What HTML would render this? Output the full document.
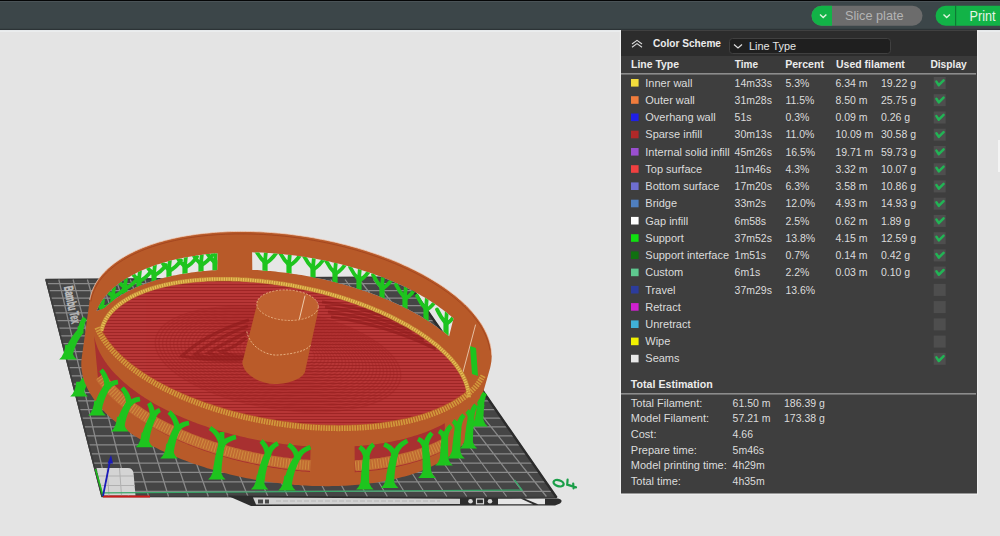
<!DOCTYPE html>
<html><head><meta charset="utf-8"><style>
html,body{margin:0;padding:0;width:1000px;height:536px;overflow:hidden;background:#e4e4e4}
svg{display:block}
.r{font-family:"Liberation Sans",sans-serif;fill:#dcdcdc}
.b{font-family:"Liberation Sans",sans-serif;font-weight:bold;fill:#ececec}
.n{font-family:"Liberation Sans",sans-serif;fill:#dcdcdc;font-size:10.5px}
</style></head><body>
<svg width="1000" height="536" viewBox="0 0 1000 536">
<rect x="0" y="31" width="1000" height="505" fill="#e4e4e4"/>
<path d="M46.0,279.5 L404.0,277.0 L556.5,497.5 L102.0,496.5 Z" fill="#454545" stroke="#3a3a3a" stroke-width="1.5" stroke-linejoin="round"/>
<path d="M58.8,279.5 L108.8,496.5 M73.1,279.5 L128.7,496.5 M87.4,279.5 L148.6,496.5 M101.7,279.5 L168.5,496.5 M116.0,279.5 L188.4,496.5 M130.3,279.5 L208.3,496.5 M144.7,279.5 L228.1,496.5 M159.0,279.5 L248.0,496.5 M173.3,279.5 L267.9,496.5 M187.6,279.5 L287.8,496.5 M201.9,279.5 L307.7,496.5 M216.2,279.5 L327.6,496.5 M230.5,279.5 L347.5,496.5 M244.8,279.5 L367.4,496.5 M259.1,279.5 L387.3,496.5 M273.4,279.5 L407.2,496.5 M287.8,279.5 L427.1,496.5 M302.1,279.5 L446.9,496.5 M316.4,279.5 L466.8,496.5 M330.7,279.5 L486.7,496.5 M345.0,279.5 L506.6,496.5 M359.3,279.5 L526.5,496.5 M373.6,279.5 L546.4,496.5 M47.5,283.5 L408.0,283.5 M49.4,290.7 L413.0,290.7 M51.3,298.1 L418.1,298.1 M53.2,305.5 L423.2,305.5 M55.1,312.9 L428.3,312.9 M57.1,320.5 L433.6,320.5 M59.1,328.1 L438.9,328.1 M61.0,335.9 L444.2,335.9 M63.1,343.7 L449.6,343.7 M65.1,351.6 L455.1,351.6 M67.2,359.6 L460.6,359.6 M69.3,367.7 L466.2,367.7 M71.4,375.8 L471.9,375.8 M73.5,384.1 L477.6,384.1 M75.7,392.5 L483.4,392.5 M77.8,400.9 L489.2,400.9 M80.0,409.5 L495.1,409.5 M82.3,418.2 L501.1,418.2 M84.5,426.9 L507.2,426.9 M86.8,435.8 L513.3,435.8 M89.2,444.8 L519.5,444.8 M91.5,453.9 L525.8,453.9 M93.9,463.1 L532.2,463.1 M96.3,472.4 L538.6,472.4 M98.7,481.8 L545.1,481.8 M101.2,491.3 L551.7,491.3" stroke="#8a8a8a" stroke-width="1.25" fill="none"/>
<path d="M404,277 L556.5,497.5" stroke="#2c2c2c" stroke-width="2.4" fill="none"/>
<path d="M46,279.5 L102,496.5" stroke="#3c3c3c" stroke-width="1.5" fill="none"/>
<path d="M96.5,468 L128,468 Q132.5,468 133.5,473 L135.5,495.5 L103,495.5 Z" fill="#d4d4d4"/>
<path d="M99,476 H134 M101.5,485.5 H135 M107,468 L109,495.5 M119.5,468 L121.5,495.5" stroke="#b0b0b0" stroke-width="1" fill="none"/>
<path d="M104,492.8 L522,490 L514.5,480" stroke="#3aa86a" stroke-width="1.3" fill="none"/>
<text x="0" y="0" transform="translate(64,287) rotate(79) scale(0.56,1)" class="b" font-size="13" style="fill:#bdbdbd;stroke:#bdbdbd;stroke-width:0.6">Bambu</text>
<text x="0" y="0" transform="translate(69.5,312.5) rotate(79) scale(0.56,1)" class="b" font-size="13" style="fill:#b5b5b5;stroke:#b5b5b5;stroke-width:0.6">Tex</text>
<path d="M227,495.5 L558,498.5 Q564,500 560,503.5 L555,505.5 L251,506 Z" fill="#2d2d2d"/>
<path d="M253,497.5 L460,498.8 L460,504 L256,504.5 Z" fill="#d2d2d2"/>
<path d="M498,498.8 L521,498.8 L533,504.2 L498,504.2 Z M525,498.8 L545,498.8 L545,504.2 L538,504.2 Z" fill="#e6e6e6"/>
<rect x="476.5" y="499" width="7" height="4.8" fill="none" stroke="#d8d8d8" stroke-width="1.2"/>
<ellipse cx="470.5" cy="501.3" rx="2.3" ry="2.3" fill="#d8d8d8"/><ellipse cx="490" cy="501.3" rx="2.3" ry="2.3" fill="#d8d8d8"/>
<path d="M258,499.5 h5 v4 h-5z M265,499.5 h4 v4 h-4z" fill="#4a4a4a"/>
<path d="M276,501 H440" stroke="#c4c4c4" stroke-width="2" stroke-dasharray="5,2"/>
<path d="M103,496.5 L150,496.5" stroke="#cc1a1a" stroke-width="2.2"/>
<path d="M103,496 L95.5,469" stroke="#1cc01c" stroke-width="1.5"/>
<path d="M103,496 L110,461" stroke="#1a1ab8" stroke-width="1.8"/>
<path d="M111,455 L107.5,463.5 L113,463.5 Z" fill="#1a1ab8"/>
<ellipse cx="558.6" cy="483.2" rx="5.2" ry="3.0" transform="rotate(16 558.6 483.2)" fill="none" stroke="#1a9e48" stroke-width="2.3"/>
<path d="M567.6,479.6 L567.2,484.6 L576,487.4 M573.2,483.6 L573.6,488.4" fill="none" stroke="#1a9e48" stroke-width="2.2" stroke-linecap="round"/>
<path d="M72.3,357.8 L72.7,355.3 L73.3,352.8 L74.0,350.3 L74.8,347.9 L75.8,345.4 L76.9,343.0 L78.2,340.6 L79.6,338.2 L81.2,335.8 L82.9,333.5 L77.8,329.2 L75.7,331.7 L73.8,334.2 L72.0,336.8 L70.3,339.4 L68.8,342.1 L67.5,344.8 L66.3,347.6 L65.3,350.4 L64.4,353.3 L63.7,356.2 Z" fill="#1ec41e"/>
<path d="M83.3,333.3 L83.2,332.1 L83.1,330.9 L83.0,329.8 L82.8,328.8 L82.7,327.9 L82.6,327.1 L82.4,326.4 L82.3,325.7 L77.7,326.3 L77.7,326.8 L77.7,327.4 L77.6,328.2 L77.6,329.0 L77.5,330.0 L77.5,331.0 L77.4,332.2 L77.4,333.4 Z" fill="#1ec41e"/>
<path d="M83.3,333.6 L83.4,331.3 L83.6,329.1 L84.0,327.1 L84.4,325.3 L84.8,323.6 L85.4,322.0 L86.1,320.6 L86.8,319.4 L83.2,316.6 L82.0,318.2 L81.0,319.9 L80.1,321.7 L79.3,323.7 L78.7,325.9 L78.1,328.2 L77.7,330.6 L77.4,333.2 Z" fill="#1ec41e"/>
<path d="M59.2,359.5 Q64.8,354.5 65.2,344.7 L70.8,344.7 Q71.2,354.5 76.8,359.5 Z" fill="#1ec41e"/>
<path d="M83.2,395.0 L83.8,392.8 L84.5,390.5 L85.4,388.2 L86.5,385.9 L87.7,383.6 L89.2,381.4 L90.8,379.1 L92.7,376.8 L94.7,374.6 L96.9,372.3 L92.5,367.4 L89.9,369.7 L87.5,372.0 L85.2,374.4 L83.2,376.9 L81.3,379.4 L79.6,382.0 L78.1,384.7 L76.8,387.4 L75.7,390.1 L74.8,393.0 Z" fill="#1ec41e"/>
<path d="M97.7,371.7 L97.4,368.8 L97.1,366.1 L96.6,363.5 L96.1,361.1 L95.5,358.8 L94.7,356.7 L93.9,354.8 L93.0,353.0 L89.0,355.0 L89.6,356.6 L90.1,358.3 L90.6,360.1 L90.9,362.2 L91.3,364.4 L91.5,366.7 L91.7,369.3 L91.8,372.0 Z" fill="#1ec41e"/>
<path d="M97.4,373.1 L97.4,372.9 L97.6,372.6 L98.0,372.2 L98.7,371.8 L99.7,371.3 L101.0,370.9 L102.5,370.6 L104.2,370.3 L103.8,365.7 L101.8,365.9 L100.0,366.1 L98.3,366.5 L96.7,366.9 L95.3,367.5 L94.0,368.3 L92.9,369.3 L92.0,370.6 Z" fill="#1ec41e"/>
<path d="M70.2,396.5 Q75.8,391.5 76.2,381.7 L81.8,381.7 Q82.2,391.5 87.8,396.5 Z" fill="#1ec41e"/>

<path d="M81.3,363.8 L81.3,362.1 L81.4,360.5 L81.6,358.8 L81.8,357.2 L89.7,300.2 L90.0,298.6 L90.3,296.9 L90.7,295.3 L91.2,293.7 L91.7,292.1 L92.3,290.5 L93.0,288.9 L93.7,287.3 L94.5,285.7 L95.3,284.2 L96.2,282.7 L97.1,281.1 L98.2,279.6 L99.2,278.1 L100.4,276.7 L101.5,275.2 L102.8,273.8 L104.1,272.4 L105.4,271.0 L106.9,269.6 L108.3,268.2 L109.9,266.9 L111.4,265.5 L113.1,264.2 L114.8,263.0 L116.5,261.7 L118.3,260.5 L120.1,259.2 L122.0,258.0 L124.0,256.9 L126.0,255.7 L128.1,254.6 L130.2,253.5 L132.3,252.4 L134.5,251.3 L136.7,250.3 L139.0,249.3 L141.4,248.3 L143.8,247.3 L146.2,246.4 L148.7,245.5 L151.2,244.6 L153.7,243.8 L156.3,242.9 L159.0,242.1 L161.7,241.4 L164.4,240.6 L167.1,239.9 L169.9,239.2 L172.8,238.5 L175.6,237.9 L178.5,237.3 L181.5,236.7 L184.4,236.2 L187.5,235.7 L190.5,235.2 L193.5,234.7 L196.6,234.3 L199.8,233.9 L202.9,233.5 L206.1,233.2 L209.3,232.9 L212.5,232.6 L215.8,232.3 L219.0,232.1 L222.3,231.9 L225.7,231.8 L229.0,231.6 L232.4,231.5 L235.7,231.5 L239.1,231.4 L242.5,231.4 L245.9,231.4 L249.4,231.5 L252.8,231.6 L256.3,231.7 L259.7,231.8 L263.2,232.0 L266.7,232.2 L270.2,232.5 L273.7,232.7 L277.2,233.0 L280.7,233.3 L284.2,233.7 L287.7,234.1 L291.2,234.5 L294.8,234.9 L298.3,235.4 L301.8,235.9 L305.3,236.5 L308.8,237.0 L312.3,237.6 L315.8,238.2 L319.2,238.9 L322.7,239.6 L326.2,240.3 L329.6,241.0 L333.1,241.7 L336.5,242.5 L339.9,243.4 L343.3,244.2 L346.7,245.1 L350.1,246.0 L353.4,246.9 L356.7,247.8 L360.0,248.8 L363.3,249.8 L366.6,250.8 L369.8,251.9 L373.0,252.9 L376.2,254.0 L379.4,255.1 L382.5,256.3 L385.6,257.4 L388.7,258.6 L391.8,259.8 L394.8,261.1 L397.8,262.3 L400.7,263.6 L403.7,264.9 L406.5,266.2 L409.4,267.5 L412.2,268.9 L415.0,270.3 L417.7,271.7 L420.4,273.1 L423.1,274.5 L425.7,276.0 L428.3,277.4 L430.8,278.9 L433.3,280.4 L435.8,281.9 L438.2,283.4 L440.5,285.0 L442.9,286.5 L445.1,288.1 L447.4,289.7 L449.5,291.3 L451.7,292.9 L453.7,294.5 L455.8,296.1 L457.7,297.8 L459.7,299.4 L461.5,301.1 L463.4,302.7 L465.1,304.4 L466.9,306.1 L468.5,307.8 L470.1,309.5 L471.7,311.2 L473.2,312.9 L474.6,314.7 L476.0,316.4 L477.3,318.1 L478.6,319.9 L479.8,321.6 L481.0,323.3 L482.1,325.1 L483.1,326.8 L484.1,328.6 L485.0,330.3 L485.9,332.1 L486.7,333.8 L487.5,335.6 L488.1,337.3 L488.8,339.1 L489.3,340.8 L489.8,342.5 L490.3,344.3 L490.7,346.0 L491.0,347.7 L491.2,349.5 L491.4,351.2 L491.6,352.9 L491.7,354.6 L491.7,356.3 L491.6,358.0 L491.5,359.7 L491.4,361.3 L491.1,363.0 L490.8,364.7 L490.5,366.3 L490.1,368.0 L474.3,423.5 L473.8,425.1 L473.3,426.7 L472.7,428.3 L472.1,429.8 L471.4,431.4 L470.6,432.9 L469.8,434.4 L468.9,435.9 L468.0,437.4 L467.0,438.9 L465.9,440.4 L464.8,441.8 L463.7,443.2 L462.4,444.6 L461.2,446.0 L459.8,447.4 L458.4,448.8 L457.0,450.1 L455.5,451.4 L454.0,452.7 L452.4,454.0 L450.7,455.2 L449.0,456.5 L447.2,457.7 L445.4,458.9 L443.6,460.1 L441.6,461.2 L439.7,462.4 L437.7,463.5 L435.6,464.5 L433.5,465.6 L431.4,466.6 L429.2,467.7 L426.9,468.6 L424.6,469.6 L422.3,470.6 L419.9,471.5 L417.5,472.4 L415.0,473.2 L412.5,474.1 L410.0,474.9 L407.4,475.7 L404.7,476.4 L402.1,477.1 L399.4,477.8 L396.6,478.5 L393.8,479.2 L391.0,479.8 L388.2,480.4 L385.3,481.0 L382.4,481.5 L379.5,482.0 L376.5,482.5 L373.5,482.9 L370.4,483.3 L367.4,483.7 L364.3,484.1 L361.2,484.4 L358.0,484.7 L354.9,485.0 L351.7,485.3 L348.5,485.5 L345.3,485.7 L342.0,485.8 L338.7,486.0 L335.4,486.0 L332.1,486.1 L328.8,486.2 L325.5,486.2 L322.1,486.1 L318.8,486.1 L315.4,486.0 L312.0,485.9 L308.6,485.8 L305.2,485.6 L301.8,485.4 L298.4,485.1 L294.9,484.9 L291.5,484.6 L288.1,484.3 L284.6,483.9 L281.2,483.5 L277.7,483.1 L274.3,482.7 L270.8,482.2 L267.4,481.7 L264.0,481.2 L260.5,480.7 L257.1,480.1 L253.7,479.5 L250.3,478.8 L246.9,478.2 L243.5,477.5 L240.1,476.8 L236.7,476.0 L233.4,475.3 L230.0,474.5 L226.7,473.6 L223.4,472.8 L220.1,471.9 L216.8,471.0 L213.6,470.1 L210.3,469.1 L207.1,468.2 L203.9,467.1 L200.7,466.1 L197.6,465.1 L194.4,464.0 L191.3,462.9 L188.3,461.8 L185.2,460.6 L182.2,459.5 L179.2,458.3 L176.2,457.1 L173.3,455.9 L170.4,454.6 L167.6,453.3 L164.7,452.1 L161.9,450.7 L159.2,449.4 L156.5,448.1 L153.8,446.7 L151.1,445.3 L148.5,443.9 L145.9,442.5 L143.4,441.1 L140.9,439.6 L138.5,438.2 L136.1,436.7 L133.7,435.2 L131.4,433.7 L129.1,432.1 L126.9,430.6 L124.7,429.1 L122.6,427.5 L120.5,425.9 L118.5,424.3 L116.5,422.7 L114.5,421.1 L112.7,419.5 L110.8,417.9 L109.0,416.2 L107.3,414.6 L105.6,412.9 L104.0,411.3 L102.4,409.6 L100.9,407.9 L99.4,406.3 L98.0,404.6 L96.6,402.9 L95.3,401.2 L94.1,399.5 L92.9,397.8 L91.8,396.1 L90.7,394.4 L89.7,392.7 L88.7,390.9 L87.8,389.2 L86.9,387.5 L86.2,385.8 L85.4,384.1 L84.7,382.4 L84.1,380.7 L83.6,379.0 L83.1,377.2 L82.6,375.5 L82.3,373.8 L82.0,372.2 L81.7,370.5 L81.5,368.8 L81.4,367.1 L81.3,365.4 Z" fill="#b85a29"/>
<path d="M89.7,300.0 L89.9,298.8 L90.2,297.6 L90.5,296.3 L90.8,295.1 L91.1,293.9 L91.5,292.7 L91.9,291.5 L92.4,290.3 L92.9,289.1 L93.4,287.9 L94.0,286.7 L94.6,285.5 L95.2,284.4 L95.8,283.2 L96.5,282.1 L97.3,280.9 L98.0,279.8 L98.8,278.7 L99.6,277.6 L100.5,276.5 L101.4,275.4 L102.3,274.3 L103.3,273.3 L104.3,272.2 L105.3,271.1 L106.3,270.1 L107.4,269.1 L108.5,268.0 L109.7,267.0 L110.8,266.0 L112.0,265.1 L113.3,264.1 L114.5,263.1 L115.8,262.2 L117.2,261.2 L118.5,260.3 L119.9,259.4 L121.3,258.5 L122.8,257.6 L124.2,256.7 L125.7,255.8 L127.3,255.0 L128.8,254.2 L130.4,253.3 L132.0,252.5 L133.7,251.7 L135.3,250.9 L137.0,250.2 L138.8,249.4 L140.5,248.7 L142.3,247.9 L144.1,247.2 L145.9,246.5 L147.7,245.8 L149.6,245.2 L151.5,244.5 L153.4,243.9 L155.4,243.2 L157.3,242.6 L159.3,242.0 L161.3,241.5 L163.4,240.9 L165.4,240.3 L167.5,239.8 L169.6,239.3 L171.7,238.8 L173.8,238.3 L176.0,237.8 L178.2,237.4 L180.4,236.9 L182.6,236.5 L184.8,236.1 L187.1,235.7 L189.3,235.4 L191.6,235.0 L193.9,234.7 L196.3,234.3 L198.6,234.0 L200.9,233.7 L203.3,233.5 L205.7,233.2 L208.1,233.0 L210.5,232.8 L212.9,232.5 L215.4,232.4 L217.8,232.2 L220.3,232.0 L222.8,231.9 L225.2,231.8 L227.7,231.7 L230.3,231.6 L232.8,231.5 L235.3,231.5 L237.8,231.4 L240.4,231.4 L242.9,231.4 L245.5,231.4 L248.1,231.5 L250.7,231.5 L253.2,231.6 L255.8,231.7 L258.4,231.8 L261.0,231.9 L263.7,232.0 L266.3,232.2 L268.9,232.4 L271.5,232.5 L274.1,232.8 L276.8,233.0 L279.4,233.2 L282.0,233.5 L284.7,233.7 L287.3,234.0 L289.9,234.3 L292.6,234.7 L295.2,235.0 L297.8,235.4 L300.5,235.7 L303.1,236.1 L305.7,236.5 L308.3,236.9 L311.0,237.4 L313.6,237.8 L316.2,238.3 L318.8,238.8 L321.4,239.3 L324.0,239.8 L326.6,240.3 L329.2,240.9 L331.8,241.5 L334.4,242.0 L336.9,242.6 L339.5,243.2 L342.0,243.9 L344.6,244.5 L347.1,245.2 L349.6,245.8 L352.1,246.5 L354.6,247.2 L357.1,247.9 L359.6,248.7 L362.1,249.4 L364.5,250.2 L367.0,250.9 L369.4,251.7 L371.8,252.5 L374.2,253.3 L376.6,254.2 L379.0,255.0 L381.4,255.9 L383.7,256.7 L386.0,257.6 L388.3,258.5 L390.6,259.4 L392.9,260.3 L395.2,261.2 L397.4,262.2 L399.6,263.1 L401.8,264.1 L404.0,265.1 L406.2,266.0 L408.3,267.0 L410.4,268.1 L412.6,269.1 L414.6,270.1 L416.7,271.1 L418.7,272.2 L420.8,273.3 L422.8,274.3 L424.7,275.4 L426.7,276.5 L428.6,277.6 L430.5,278.7 L432.4,279.8 L434.2,281.0 L436.1,282.1 L437.9,283.2 L439.7,284.4 L441.4,285.5 L443.1,286.7 L444.8,287.9 L446.5,289.1 L448.2,290.3 L449.8,291.5 L451.4,292.7 L453.0,293.9 L454.5,295.1 L456.0,296.3 L457.5,297.6 L458.9,298.8 L460.4,300.0 L461.8,301.3 L463.1,302.5 L464.5,303.8 L465.8,305.1 L467.1,306.3 L468.3,307.6 L469.5,308.9 L470.7,310.2 L471.9,311.4 L473.0,312.7 L474.1,314.0 L475.1,315.3 L476.2,316.6 L477.2,317.9 L478.1,319.2 L479.1,320.5 L480.0,321.8 L480.8,323.1 L481.7,324.4 L482.5,325.7 L483.3,327.0 L484.0,328.4 L484.7,329.7 L485.4,331.0 L486.0,332.3 L486.6,333.6 L487.2,334.9 L487.7,336.2 L488.2,337.5 L488.7,338.8 L489.1,340.1 L489.5,341.5 L489.9,342.8 L490.2,344.1 L490.5,345.4 L490.8,346.7 L491.0,348.0 L491.2,349.0 L491.3,349.7 L491.4,350.3 L491.4,351.0 L491.5,351.6 L491.5,352.3 L491.6,352.9 L491.6,353.5 L491.7,354.2 L491.7,354.8 L491.7,355.4" stroke="#f2d2c2" stroke-width="0.9" fill="none" opacity="0.85"/>
<path d="M90.9,301.5 L91.1,300.3 L91.3,299.1 L91.6,297.9 L91.9,296.6 L92.3,295.4 L92.7,294.2 L93.1,293.1 L93.6,291.9 L94.0,290.7 L94.6,289.5 L95.1,288.4 L95.7,287.2 L96.3,286.1 L97.0,284.9 L97.7,283.8 L98.4,282.7 L99.1,281.6 L99.9,280.5 L100.7,279.4 L101.6,278.3 L102.5,277.2 L103.4,276.1 L104.3,275.1 L105.3,274.0 L106.3,273.0 L107.4,272.0 L108.5,271.0 L109.6,269.9 L110.7,269.0 L111.9,268.0 L113.1,267.0 L114.3,266.0 L115.5,265.1 L116.8,264.1 L118.1,263.2 L119.5,262.3 L120.9,261.4 L122.3,260.5 L123.7,259.6 L125.2,258.8 L126.7,257.9 L128.2,257.1 L129.7,256.2 L131.3,255.4 L132.9,254.6 L134.5,253.8 L136.2,253.1 L137.9,252.3 L139.6,251.6 L141.3,250.8 L143.1,250.1 L144.9,249.4 L146.7,248.7 L148.5,248.1 L150.4,247.4 L152.3,246.7 L154.2,246.1 L156.1,245.5 L158.0,244.9 L160.0,244.3 L162.0,243.7 L164.0,243.2 L166.1,242.6 L168.1,242.1 L170.2,241.6 L172.3,241.1 L174.5,240.6 L176.6,240.2 L178.8,239.7 L180.9,239.3 L183.1,238.9 L185.4,238.5 L187.6,238.1 L189.9,237.7 L192.1,237.4 L194.4,237.1 L196.7,236.7 L199.1,236.4 L201.4,236.2 L203.7,235.9 L206.1,235.6 L208.5,235.4 L210.9,235.2 L213.3,235.0 L215.7,234.8 L218.2,234.6 L220.6,234.5 L223.1,234.4 L225.5,234.2 L228.0,234.1 L230.5,234.1 L233.0,234.0 L235.5,233.9 L238.1,233.9 L240.6,233.9 L243.1,233.9 L245.7,233.9 L248.2,234.0 L250.8,234.0 L253.4,234.1 L256.0,234.2 L258.5,234.3 L261.1,234.4 L263.7,234.5 L266.3,234.7 L268.9,234.9 L271.5,235.0 L274.1,235.3 L276.7,235.5 L279.4,235.7 L282.0,236.0 L284.6,236.2 L287.2,236.5 L289.8,236.8 L292.4,237.2 L295.1,237.5 L297.7,237.8 L300.3,238.2 L302.9,238.6 L305.5,239.0 L308.1,239.4 L310.7,239.9 L313.3,240.3 L315.9,240.8 L318.5,241.3 L321.1,241.8 L323.7,242.3 L326.3,242.8 L328.9,243.4 L331.4,243.9 L334.0,244.5 L336.6,245.1 L339.1,245.7 L341.6,246.3 L344.2,246.9 L346.7,247.6 L349.2,248.3 L351.7,248.9 L354.2,249.6 L356.7,250.3 L359.1,251.1 L361.6,251.8 L364.0,252.5 L366.4,253.3 L368.9,254.1 L371.3,254.9 L373.6,255.7 L376.0,256.5 L378.4,257.3 L380.7,258.2 L383.1,259.0 L385.4,259.9 L387.7,260.8 L389.9,261.7 L392.2,262.6 L394.5,263.5 L396.7,264.4 L398.9,265.4 L401.1,266.3 L403.3,267.3 L405.4,268.3 L407.5,269.3 L409.7,270.3 L411.8,271.3 L413.8,272.3 L415.9,273.3 L417.9,274.4 L419.9,275.4 L421.9,276.5 L423.9,277.5 L425.8,278.6 L427.7,279.7 L429.6,280.8 L431.5,281.9 L433.3,283.0 L435.1,284.1 L436.9,285.3 L438.7,286.4 L440.5,287.6 L442.2,288.7 L443.9,289.9 L445.5,291.1 L447.2,292.2 L448.8,293.4 L450.4,294.6 L451.9,295.8 L453.5,297.0 L455.0,298.2 L456.4,299.4 L457.9,300.7 L459.3,301.9 L460.7,303.1 L462.1,304.4 L463.4,305.6 L464.7,306.9 L466.0,308.1 L467.2,309.4 L468.4,310.6 L469.6,311.9 L470.7,313.2 L471.9,314.4 L473.0,315.7 L474.0,317.0 L475.0,318.3 L476.0,319.6 L477.0,320.8 L477.9,322.1 L478.8,323.4 L479.7,324.7 L480.5,326.0 L481.3,327.3 L482.1,328.6 L482.8,329.9 L483.5,331.2 L484.2,332.5 L484.8,333.8 L485.4,335.1 L486.0,336.4 L486.5,337.7 L487.0,339.0 L487.5,340.2 L487.9,341.5 L488.3,342.8 L488.7,344.1 L489.0,345.4 L489.3,346.7 L489.6,348.0 L489.8,349.3 L490.0,350.3" stroke="#9c3f1c" stroke-width="0.9" fill="none" opacity="0.8"/>
<clipPath id="wc"><path d="M96.6,311.1 L97.0,310.0 L97.5,308.8 L98.1,307.7 L98.6,306.5 L99.2,305.4 L99.9,304.2 L100.5,303.1 L101.2,302.0 L102.0,300.9 L102.7,299.8 L103.5,298.7 L104.3,297.6 L105.2,296.5 L106.1,295.5 L107.0,294.4 L108.0,293.4 L108.9,292.3 L109.9,291.3 L111.0,290.3 L112.1,289.3 L113.2,288.3 L114.3,287.3 L115.5,286.3 L116.6,285.4 L117.9,284.4 L119.1,283.5 L120.4,282.5 L121.7,281.6 L123.0,280.7 L124.4,279.8 L125.8,278.9 L127.2,278.1 L128.7,277.2 L130.1,276.4 L131.6,275.5 L133.2,274.7 L134.7,273.9 L136.3,273.1 L137.9,272.3 L139.5,271.5 L141.2,270.8 L142.9,270.0 L144.6,269.3 L146.3,268.6 L148.1,267.9 L149.9,267.2 L151.7,266.5 L153.5,265.9 L155.4,265.2 L157.2,264.6 L159.1,264.0 L161.0,263.4 L163.0,262.8 L164.9,262.2 L166.9,261.7 L168.9,261.1 L170.9,260.6 L173.0,260.1 L175.1,259.6 L177.1,259.1 L179.2,258.7 L181.4,258.2 L183.5,257.8 L185.7,257.4 L187.8,257.0 L190.0,256.6 L192.2,256.2 L194.5,255.9 L196.7,255.5 L198.9,255.2 L201.2,254.9 L203.5,254.6 L205.8,254.3 L208.1,254.1 L210.4,253.8 L212.8,253.6 L215.1,253.4 L217.5,253.2 L217.2,270.0 L214.8,270.2 L212.4,270.3 L210.0,270.5 L207.6,270.7 L205.2,270.9 L202.8,271.1 L200.5,271.4 L198.2,271.6 L195.8,271.9 L193.5,272.2 L191.2,272.5 L189.0,272.9 L186.7,273.2 L184.5,273.6 L182.2,273.9 L180.0,274.3 L177.8,274.7 L175.7,275.2 L173.5,275.6 L171.4,276.1 L169.3,276.6 L167.2,277.0 L165.1,277.6 L163.0,278.1 L161.0,278.6 L159.0,279.2 L157.0,279.8 L155.0,280.3 L153.1,280.9 L151.2,281.6 L149.3,282.2 L147.4,282.8 L145.6,283.5 L143.7,284.2 L141.9,284.9 L140.1,285.6 L138.4,286.3 L136.7,287.1 L135.0,287.8 L133.3,288.6 L131.6,289.4 L130.0,290.2 L128.4,291.0 L126.8,291.8 L125.3,292.6 L123.8,293.5 L122.3,294.3 L120.8,295.2 L119.4,296.1 L118.0,297.0 L116.6,297.9 L115.3,298.8 L113.9,299.8 L112.7,300.7 L111.4,301.7 L110.2,302.7 L109.0,303.7 L107.8,304.7 L106.7,305.7 L105.6,306.7 L104.5,307.7 Z"/><path d="M252.1,252.3 L254.6,252.4 L257.1,252.4 L259.7,252.5 L262.2,252.6 L264.7,252.8 L267.2,252.9 L269.8,253.1 L272.3,253.2 L274.8,253.4 L277.4,253.7 L279.9,253.9 L282.5,254.1 L285.0,254.4 L287.6,254.7 L290.1,255.0 L292.7,255.3 L295.2,255.6 L297.7,255.9 L300.3,256.3 L302.8,256.7 L305.4,257.0 L307.9,257.5 L310.4,257.9 L312.9,258.3 L315.5,258.8 L318.0,259.2 L320.5,259.7 L323.0,260.2 L325.5,260.7 L328.0,261.3 L330.5,261.8 L333.0,262.4 L335.4,262.9 L337.9,263.5 L340.3,264.1 L342.8,264.7 L345.2,265.4 L347.7,266.0 L350.1,266.7 L352.5,267.4 L354.9,268.1 L357.3,268.8 L359.6,269.5 L362.0,270.2 L364.3,271.0 L366.7,271.7 L369.0,272.5 L371.3,273.3 L373.6,274.1 L375.9,274.9 L378.1,275.7 L380.4,276.5 L382.6,277.4 L384.8,278.2 L387.0,279.1 L389.2,280.0 L391.4,280.9 L393.5,281.8 L395.6,282.7 L397.7,283.7 L399.8,284.6 L401.9,285.6 L404.0,286.5 L406.0,287.5 L408.0,288.5 L410.0,289.5 L412.0,290.5 L413.9,291.5 L415.8,292.6 L417.7,293.6 L419.6,294.6 L421.5,295.7 L423.3,296.8 L425.1,297.8 L426.9,298.9 L428.7,300.0 L430.4,301.1 L432.1,302.2 L433.8,303.3 L435.5,304.5 L437.2,305.6 L438.8,306.7 L440.4,307.9 L441.9,309.1 L443.5,310.2 L445.0,311.4 L446.5,312.6 L447.9,313.7 L449.4,314.9 L450.8,316.1 L452.1,317.3 L453.5,318.5 L449.1,336.3 L447.6,335.1 L446.1,333.8 L444.6,332.6 L443.0,331.4 L441.4,330.2 L439.8,328.9 L438.2,327.7 L436.5,326.5 L434.8,325.4 L433.1,324.2 L431.4,323.0 L429.6,321.8 L427.8,320.7 L426.0,319.5 L424.1,318.4 L422.3,317.3 L420.4,316.1 L418.5,315.0 L416.5,313.9 L414.6,312.8 L412.6,311.8 L410.6,310.7 L408.6,309.6 L406.5,308.6 L404.4,307.5 L402.4,306.5 L400.3,305.5 L398.1,304.5 L396.0,303.5 L393.8,302.5 L391.6,301.5 L389.4,300.6 L387.2,299.6 L385.0,298.7 L382.7,297.7 L380.5,296.8 L378.2,295.9 L375.9,295.0 L373.6,294.2 L371.2,293.3 L368.9,292.5 L366.5,291.6 L364.1,290.8 L361.7,290.0 L359.3,289.2 L356.9,288.4 L354.5,287.7 L352.1,286.9 L349.6,286.2 L347.2,285.5 L344.7,284.8 L342.2,284.1 L339.7,283.4 L337.2,282.7 L334.7,282.1 L332.2,281.4 L329.7,280.8 L327.1,280.2 L324.6,279.6 L322.0,279.1 L319.5,278.5 L316.9,278.0 L314.4,277.5 L311.8,276.9 L309.2,276.5 L306.6,276.0 L304.0,275.5 L301.5,275.1 L298.9,274.7 L296.3,274.3 L293.7,273.9 L291.1,273.5 L288.5,273.1 L285.9,272.8 L283.3,272.5 L280.7,272.2 L278.1,271.9 L275.5,271.6 L272.9,271.3 L270.3,271.1 L267.8,270.9 L265.2,270.7 L262.6,270.5 L260.0,270.3 L257.4,270.1 L254.9,270.0 L252.3,269.9 Z"/></clipPath>
<g clip-path="url(#wc)"><rect x="0" y="200" width="620" height="200" fill="#e6e6e6"/><path d="M46.0,279.5 L404.0,277.0 L556.5,497.5 L102.0,496.5 Z" fill="#454545" stroke="#3a3a3a" stroke-width="1.5" stroke-linejoin="round"/>
<path d="M58.8,279.5 L108.8,496.5 M73.1,279.5 L128.7,496.5 M87.4,279.5 L148.6,496.5 M101.7,279.5 L168.5,496.5 M116.0,279.5 L188.4,496.5 M130.3,279.5 L208.3,496.5 M144.7,279.5 L228.1,496.5 M159.0,279.5 L248.0,496.5 M173.3,279.5 L267.9,496.5 M187.6,279.5 L287.8,496.5 M201.9,279.5 L307.7,496.5 M216.2,279.5 L327.6,496.5 M230.5,279.5 L347.5,496.5 M244.8,279.5 L367.4,496.5 M259.1,279.5 L387.3,496.5 M273.4,279.5 L407.2,496.5 M287.8,279.5 L427.1,496.5 M302.1,279.5 L446.9,496.5 M316.4,279.5 L466.8,496.5 M330.7,279.5 L486.7,496.5 M345.0,279.5 L506.6,496.5 M359.3,279.5 L526.5,496.5 M373.6,279.5 L546.4,496.5 M47.5,283.5 L408.0,283.5 M49.4,290.7 L413.0,290.7 M51.3,298.1 L418.1,298.1 M53.2,305.5 L423.2,305.5 M55.1,312.9 L428.3,312.9 M57.1,320.5 L433.6,320.5 M59.1,328.1 L438.9,328.1 M61.0,335.9 L444.2,335.9 M63.1,343.7 L449.6,343.7 M65.1,351.6 L455.1,351.6 M67.2,359.6 L460.6,359.6 M69.3,367.7 L466.2,367.7 M71.4,375.8 L471.9,375.8 M73.5,384.1 L477.6,384.1 M75.7,392.5 L483.4,392.5 M77.8,400.9 L489.2,400.9 M80.0,409.5 L495.1,409.5 M82.3,418.2 L501.1,418.2 M84.5,426.9 L507.2,426.9 M86.8,435.8 L513.3,435.8 M89.2,444.8 L519.5,444.8 M91.5,453.9 L525.8,453.9 M93.9,463.1 L532.2,463.1 M96.3,472.4 L538.6,472.4 M98.7,481.8 L545.1,481.8 M101.2,491.3 L551.7,491.3" stroke="#8a8a8a" stroke-width="1.25" fill="none"/>
<path d="M404,277 L556.5,497.5" stroke="#2c2c2c" stroke-width="2.4" fill="none"/>
<path d="M46,279.5 L102,496.5" stroke="#3c3c3c" stroke-width="1.5" fill="none"/>
<path d="M96.5,468 L128,468 Q132.5,468 133.5,473 L135.5,495.5 L103,495.5 Z" fill="#d4d4d4"/>
<path d="M99,476 H134 M101.5,485.5 H135 M107,468 L109,495.5 M119.5,468 L121.5,495.5" stroke="#b0b0b0" stroke-width="1" fill="none"/>
<path d="M104,492.8 L522,490 L514.5,480" stroke="#3aa86a" stroke-width="1.3" fill="none"/>
<text x="0" y="0" transform="translate(64,287) rotate(79) scale(0.56,1)" class="b" font-size="13" style="fill:#bdbdbd;stroke:#bdbdbd;stroke-width:0.6">Bambu</text>
<text x="0" y="0" transform="translate(69.5,312.5) rotate(79) scale(0.56,1)" class="b" font-size="13" style="fill:#b5b5b5;stroke:#b5b5b5;stroke-width:0.6">Tex</text>
<path d="M227,495.5 L558,498.5 Q564,500 560,503.5 L555,505.5 L251,506 Z" fill="#2d2d2d"/>
<path d="M253,497.5 L460,498.8 L460,504 L256,504.5 Z" fill="#d2d2d2"/>
<path d="M498,498.8 L521,498.8 L533,504.2 L498,504.2 Z M525,498.8 L545,498.8 L545,504.2 L538,504.2 Z" fill="#e6e6e6"/>
<rect x="476.5" y="499" width="7" height="4.8" fill="none" stroke="#d8d8d8" stroke-width="1.2"/>
<ellipse cx="470.5" cy="501.3" rx="2.3" ry="2.3" fill="#d8d8d8"/><ellipse cx="490" cy="501.3" rx="2.3" ry="2.3" fill="#d8d8d8"/>
<path d="M258,499.5 h5 v4 h-5z M265,499.5 h4 v4 h-4z" fill="#4a4a4a"/>
<path d="M276,501 H440" stroke="#c4c4c4" stroke-width="2" stroke-dasharray="5,2"/>
<path d="M103,496.5 L150,496.5" stroke="#cc1a1a" stroke-width="2.2"/>
<path d="M103,496 L95.5,469" stroke="#1cc01c" stroke-width="1.5"/>
<path d="M103,496 L110,461" stroke="#1a1ab8" stroke-width="1.8"/>
<path d="M111,455 L107.5,463.5 L113,463.5 Z" fill="#1a1ab8"/>
<ellipse cx="558.6" cy="483.2" rx="5.2" ry="3.0" transform="rotate(16 558.6 483.2)" fill="none" stroke="#1a9e48" stroke-width="2.3"/>
<path d="M567.6,479.6 L567.2,484.6 L576,487.4 M573.2,483.6 L573.6,488.4" fill="none" stroke="#1a9e48" stroke-width="2.2" stroke-linecap="round"/><path d="M102.0,319.4 L102.0,306.9" stroke="#1ec41e" stroke-width="5.2" fill="none" stroke-linecap="round"/>
<path d="M102.0,307.9 Q97.0,305.1 93.0,300.4 M102.0,306.9 L103.0,300.4 M102.0,308.9 Q109.0,306.0 114.0,301.4" stroke="#1ec41e" stroke-width="3.8" fill="none" stroke-linecap="round"/>
<path d="M113.0,309.2 L113.0,295.3" stroke="#1ec41e" stroke-width="5.2" fill="none" stroke-linecap="round"/>
<path d="M113.0,296.3 Q108.0,292.9 104.0,287.3 M113.0,295.3 L114.0,287.3 M113.0,297.3 Q120.0,294.1 125.0,288.3" stroke="#1ec41e" stroke-width="3.8" fill="none" stroke-linecap="round"/>
<path d="M125.0,301.3 L125.0,286.7" stroke="#1ec41e" stroke-width="5.2" fill="none" stroke-linecap="round"/>
<path d="M125.0,287.7 Q120.0,284.1 116.0,278.1 M125.0,286.7 L126.0,278.1 M125.0,288.7 Q132.0,285.4 137.0,279.1" stroke="#1ec41e" stroke-width="3.8" fill="none" stroke-linecap="round"/>
<path d="M139.0,294.5 L139.0,279.4" stroke="#1ec41e" stroke-width="5.2" fill="none" stroke-linecap="round"/>
<path d="M139.0,280.4 Q134.0,276.5 130.0,270.3 M139.0,279.4 L140.0,270.3 M139.0,281.4 Q146.0,278.0 151.0,271.3" stroke="#1ec41e" stroke-width="3.8" fill="none" stroke-linecap="round"/>
<path d="M154.0,289.0 L154.0,273.5" stroke="#1ec41e" stroke-width="5.2" fill="none" stroke-linecap="round"/>
<path d="M154.0,274.5 Q149.0,270.5 145.0,264.1 M154.0,273.5 L155.0,264.1 M154.0,275.5 Q161.0,272.0 166.0,265.1" stroke="#1ec41e" stroke-width="3.8" fill="none" stroke-linecap="round"/>
<path d="M169.0,284.9 L169.0,269.1" stroke="#1ec41e" stroke-width="5.2" fill="none" stroke-linecap="round"/>
<path d="M169.0,270.1 Q164.0,266.0 160.0,259.4 M169.0,269.1 L170.0,259.4 M169.0,271.1 Q176.0,267.6 181.0,260.4" stroke="#1ec41e" stroke-width="3.8" fill="none" stroke-linecap="round"/>
<path d="M185.0,281.6 L185.0,265.7" stroke="#1ec41e" stroke-width="5.2" fill="none" stroke-linecap="round"/>
<path d="M185.0,266.7 Q180.0,262.5 176.0,255.7 M185.0,265.7 L186.0,255.7 M185.0,267.7 Q192.0,264.1 197.0,256.7" stroke="#1ec41e" stroke-width="3.8" fill="none" stroke-linecap="round"/>
<path d="M201.0,279.4 L201.0,263.2" stroke="#1ec41e" stroke-width="5.2" fill="none" stroke-linecap="round"/>
<path d="M201.0,264.2 Q196.0,260.0 192.0,253.1 M201.0,263.2 L202.0,253.1 M201.0,265.2 Q208.0,261.6 213.0,254.1" stroke="#1ec41e" stroke-width="3.8" fill="none" stroke-linecap="round"/>
<path d="M215.0,278.2 L215.0,261.9" stroke="#1ec41e" stroke-width="5.2" fill="none" stroke-linecap="round"/>
<path d="M215.0,262.9 Q210.0,258.5 206.0,251.5 M215.0,261.9 L216.0,251.5 M215.0,263.9 Q222.0,260.2 227.0,252.5" stroke="#1ec41e" stroke-width="3.8" fill="none" stroke-linecap="round"/>
<path d="M265.0,278.6 L265.0,261.6" stroke="#1ec41e" stroke-width="5.2" fill="none" stroke-linecap="round"/>
<path d="M265.0,262.6 Q260.0,258.1 256.0,250.7 M265.0,261.6 L266.0,250.7 M265.0,263.6 Q272.0,259.9 277.0,251.7" stroke="#1ec41e" stroke-width="3.8" fill="none" stroke-linecap="round"/>
<path d="M289.0,281.1 L289.0,263.9" stroke="#1ec41e" stroke-width="5.2" fill="none" stroke-linecap="round"/>
<path d="M289.0,264.9 Q284.0,260.2 280.0,252.7 M289.0,263.9 L290.0,252.7 M289.0,265.9 Q296.0,262.1 301.0,253.7" stroke="#1ec41e" stroke-width="3.8" fill="none" stroke-linecap="round"/>
<path d="M313.0,285.0 L313.0,267.6" stroke="#1ec41e" stroke-width="5.2" fill="none" stroke-linecap="round"/>
<path d="M313.0,268.6 Q308.0,263.8 304.0,256.1 M313.0,267.6 L314.0,256.1 M313.0,269.6 Q320.0,265.7 325.0,257.1" stroke="#1ec41e" stroke-width="3.8" fill="none" stroke-linecap="round"/>
<path d="M335.0,289.9 L335.0,272.2" stroke="#1ec41e" stroke-width="5.2" fill="none" stroke-linecap="round"/>
<path d="M335.0,273.2 Q330.0,268.4 326.0,260.6 M335.0,272.2 L336.0,260.6 M335.0,274.2 Q342.0,270.3 347.0,261.6" stroke="#1ec41e" stroke-width="3.8" fill="none" stroke-linecap="round"/>
<path d="M359.0,296.8 L359.0,278.9" stroke="#1ec41e" stroke-width="5.2" fill="none" stroke-linecap="round"/>
<path d="M359.0,279.9 Q354.0,274.9 350.0,267.0 M359.0,278.9 L360.0,267.0 M359.0,280.9 Q366.0,276.9 371.0,268.0" stroke="#1ec41e" stroke-width="3.8" fill="none" stroke-linecap="round"/>
<path d="M382.0,305.0 L382.0,286.9" stroke="#1ec41e" stroke-width="5.2" fill="none" stroke-linecap="round"/>
<path d="M382.0,287.9 Q377.0,282.9 373.0,274.8 M382.0,286.9 L383.0,274.8 M382.0,288.9 Q389.0,284.9 394.0,275.8" stroke="#1ec41e" stroke-width="3.8" fill="none" stroke-linecap="round"/>
<path d="M405.0,315.3 L405.0,296.9" stroke="#1ec41e" stroke-width="5.2" fill="none" stroke-linecap="round"/>
<path d="M405.0,297.9 Q400.0,292.8 396.0,284.6 M405.0,296.9 L406.0,284.6 M405.0,298.9 Q412.0,294.9 417.0,285.6" stroke="#1ec41e" stroke-width="3.8" fill="none" stroke-linecap="round"/>
<path d="M426.0,326.9 L426.0,308.3" stroke="#1ec41e" stroke-width="5.2" fill="none" stroke-linecap="round"/>
<path d="M426.0,309.3 Q421.0,304.1 417.0,295.8 M426.0,308.3 L427.0,295.8 M426.0,310.3 Q433.0,306.2 438.0,296.8" stroke="#1ec41e" stroke-width="3.8" fill="none" stroke-linecap="round"/>
<path d="M446.0,340.9 L446.0,322.2" stroke="#1ec41e" stroke-width="5.2" fill="none" stroke-linecap="round"/>
<path d="M446.0,323.2 Q441.0,317.9 437.0,309.4 M446.0,322.2 L447.0,309.4 M446.0,324.2 Q453.0,320.0 458.0,310.4" stroke="#1ec41e" stroke-width="3.8" fill="none" stroke-linecap="round"/></g>
<path d="M470,346 L476,348 L478,376 L472,374 Z" fill="#1ec41e"/>
<path d="M475.6,324.6 L463,372" stroke="#f0d8c0" stroke-width="0.8"/>
<clipPath id="fc"><path d="M484.2,360.9 L483.9,362.5 L483.6,364.0 L483.2,365.6 L482.8,367.1 L482.3,368.6 L481.7,370.1 L481.1,371.6 L480.4,373.1 L479.6,374.5 L478.8,376.0 L478.0,377.4 L477.1,378.8 L476.1,380.2 L475.1,381.6 L474.0,383.0 L472.9,384.4 L471.7,385.7 L470.4,387.0 L469.1,388.3 L467.8,389.6 L466.3,390.9 L464.9,392.2 L463.4,393.4 L461.8,394.6 L460.2,395.8 L458.5,397.0 L456.8,398.1 L455.0,399.3 L453.1,400.4 L451.3,401.5 L449.3,402.6 L447.4,403.6 L445.3,404.6 L443.3,405.7 L441.2,406.6 L439.0,407.6 L436.8,408.5 L434.5,409.5 L432.2,410.3 L429.9,411.2 L427.5,412.0 L425.1,412.9 L422.6,413.7 L420.1,414.4 L417.6,415.2 L415.0,415.9 L412.4,416.6 L409.7,417.2 L407.0,417.9 L404.3,418.5 L401.5,419.1 L398.7,419.6 L395.9,420.1 L393.0,420.6 L390.1,421.1 L387.2,421.6 L384.3,422.0 L381.3,422.4 L378.3,422.7 L375.2,423.1 L372.2,423.4 L369.1,423.7 L366.0,423.9 L362.8,424.1 L359.7,424.3 L356.5,424.5 L353.3,424.6 L350.1,424.7 L346.8,424.8 L343.6,424.9 L340.3,424.9 L337.0,424.9 L333.7,424.8 L330.4,424.8 L327.1,424.7 L323.7,424.6 L320.4,424.4 L317.0,424.2 L313.7,424.0 L310.3,423.8 L306.9,423.5 L303.6,423.2 L300.2,422.9 L296.8,422.5 L293.4,422.2 L290.0,421.8 L286.6,421.3 L283.2,420.9 L279.8,420.4 L276.4,419.9 L273.1,419.3 L269.7,418.8 L266.3,418.2 L263.0,417.5 L259.6,416.9 L256.3,416.2 L252.9,415.5 L249.6,414.8 L246.3,414.0 L243.0,413.3 L239.7,412.4 L236.5,411.6 L233.2,410.8 L230.0,409.9 L226.8,409.0 L223.6,408.1 L220.4,407.1 L217.2,406.1 L214.1,405.1 L211.0,404.1 L207.9,403.1 L204.9,402.0 L201.8,400.9 L198.8,399.8 L195.8,398.7 L192.9,397.6 L190.0,396.4 L187.1,395.2 L184.2,394.0 L181.4,392.8 L178.6,391.5 L175.9,390.3 L173.1,389.0 L170.4,387.7 L167.8,386.3 L165.2,385.0 L162.6,383.7 L160.1,382.3 L157.6,380.9 L155.1,379.5 L152.7,378.1 L150.3,376.7 L148.0,375.2 L145.7,373.8 L143.5,372.3 L141.3,370.8 L139.1,369.3 L137.0,367.8 L135.0,366.3 L133.0,364.8 L131.0,363.2 L129.1,361.7 L127.2,360.1 L125.4,358.6 L123.6,357.0 L121.9,355.4 L120.2,353.8 L118.6,352.2 L117.1,350.6 L115.6,349.0 L114.1,347.4 L112.7,345.8 L111.4,344.1 L110.1,342.5 L108.8,340.9 L107.7,339.2 L106.5,337.6 L105.5,336.0 L104.5,334.3 L103.5,332.7 L102.6,331.0 L101.8,329.4 L101.0,327.7 L100.2,326.1 L99.6,324.5 L99.0,322.8 L98.4,321.2 L97.9,319.5 L97.5,317.9 L97.1,316.3 L96.8,314.7 L96.5,313.0 L96.3,311.4 L96.2,309.8 L96.1,308.2 L96.1,306.6 L96.1,305.0 L96.2,303.5 L96.4,301.9 L96.6,300.3 L96.9,298.8 L97.2,297.2 L97.6,295.7 L98.0,294.2 L98.5,292.7 L99.1,291.2 L99.7,289.7 L100.4,288.2 L101.1,286.7 L101.9,285.3 L102.8,283.8 L103.7,282.4 L104.7,281.0 L105.7,279.6 L106.8,278.3 L107.9,276.9 L109.1,275.6 L110.4,274.2 L111.7,272.9 L113.0,271.6 L114.5,270.4 L115.9,269.1 L117.4,267.9 L119.0,266.6 L120.6,265.4 L122.3,264.3 L124.0,263.1 L125.8,262.0 L127.6,260.9 L129.5,259.8 L131.4,258.7 L133.4,257.6 L135.4,256.6 L137.5,255.6 L139.6,254.6 L141.8,253.7 L144.0,252.7 L146.3,251.8 L148.6,250.9 L150.9,250.0 L153.3,249.2 L155.7,248.4 L158.2,247.6 L160.7,246.8 L163.2,246.1 L165.8,245.4 L168.4,244.7 L171.1,244.0 L173.8,243.4 L176.5,242.8 L179.3,242.2 L182.1,241.6 L184.9,241.1 L187.8,240.6 L190.7,240.1 L193.6,239.7 L196.5,239.3 L199.5,238.9 L202.5,238.5 L205.6,238.2 L208.6,237.9 L211.7,237.6 L214.8,237.4 L218.0,237.1 L221.1,236.9 L224.3,236.8 L227.5,236.6 L230.7,236.5 L234.0,236.4 L237.2,236.4 L240.5,236.4 L243.8,236.4 L247.1,236.4 L250.4,236.5 L253.7,236.6 L257.0,236.7 L260.4,236.9 L263.7,237.0 L267.1,237.2 L270.5,237.5 L273.9,237.7 L277.2,238.0 L280.6,238.4 L284.0,238.7 L287.4,239.1 L290.8,239.5 L294.2,239.9 L297.6,240.4 L301.0,240.9 L304.4,241.4 L307.7,241.9 L311.1,242.5 L314.5,243.1 L317.8,243.7 L321.2,244.4 L324.5,245.0 L327.9,245.7 L331.2,246.5 L334.5,247.2 L337.8,248.0 L341.1,248.8 L344.3,249.6 L347.6,250.5 L350.8,251.4 L354.0,252.3 L357.2,253.2 L360.4,254.1 L363.6,255.1 L366.7,256.1 L369.8,257.1 L372.9,258.2 L375.9,259.2 L379.0,260.3 L382.0,261.4 L385.0,262.6 L387.9,263.7 L390.8,264.9 L393.7,266.1 L396.6,267.3 L399.4,268.5 L402.2,269.7 L404.9,271.0 L407.7,272.3 L410.3,273.6 L413.0,274.9 L415.6,276.2 L418.2,277.6 L420.7,279.0 L423.2,280.3 L425.7,281.7 L428.1,283.2 L430.5,284.6 L432.8,286.0 L435.1,287.5 L437.3,289.0 L439.5,290.4 L441.7,291.9 L443.8,293.4 L445.8,294.9 L447.8,296.5 L449.8,298.0 L451.7,299.6 L453.6,301.1 L455.4,302.7 L457.2,304.3 L458.9,305.8 L460.5,307.4 L462.2,309.0 L463.7,310.6 L465.2,312.2 L466.7,313.9 L468.1,315.5 L469.4,317.1 L470.7,318.7 L472.0,320.4 L473.1,322.0 L474.3,323.7 L475.3,325.3 L476.3,326.9 L477.3,328.6 L478.2,330.2 L479.0,331.9 L479.8,333.5 L480.6,335.2 L481.2,336.8 L481.8,338.4 L482.4,340.1 L482.9,341.7 L483.3,343.3 L483.7,345.0 L484.0,346.6 L484.3,348.2 L484.5,349.8 L484.6,351.4 L484.7,353.0 L484.7,354.6 L484.7,356.2 L484.6,357.8 L484.4,359.4 Z"/></clipPath>
<clipPath id="dc"><path d="M468.1,405.2 L467.8,406.6 L467.4,408.0 L467.0,409.4 L466.5,410.7 L465.9,412.1 L465.4,413.4 L464.7,414.8 L464.0,416.1 L463.2,417.4 L462.4,418.7 L461.6,419.9 L460.7,421.2 L459.7,422.4 L458.7,423.6 L457.6,424.8 L456.5,426.0 L455.3,427.2 L454.0,428.3 L452.7,429.5 L451.4,430.6 L450.0,431.7 L448.6,432.7 L447.1,433.8 L445.6,434.8 L444.0,435.8 L442.3,436.8 L440.6,437.8 L438.9,438.8 L437.1,439.7 L435.3,440.6 L433.4,441.5 L431.5,442.3 L429.6,443.2 L427.6,444.0 L425.5,444.8 L423.4,445.6 L421.3,446.3 L419.1,447.0 L416.9,447.7 L414.6,448.4 L412.3,449.1 L410.0,449.7 L407.6,450.3 L405.2,450.9 L402.8,451.4 L400.3,451.9 L397.8,452.4 L395.2,452.9 L392.6,453.4 L390.0,453.8 L387.4,454.2 L384.7,454.6 L382.0,454.9 L379.2,455.2 L376.5,455.5 L373.7,455.8 L370.8,456.0 L368.0,456.2 L365.1,456.4 L362.2,456.6 L359.3,456.7 L356.3,456.8 L353.4,456.9 L350.4,456.9 L347.4,456.9 L344.3,456.9 L341.3,456.9 L338.2,456.8 L335.1,456.7 L332.0,456.6 L328.9,456.5 L325.8,456.3 L322.7,456.1 L319.5,455.9 L316.4,455.7 L313.2,455.4 L310.0,455.1 L306.8,454.7 L303.6,454.4 L300.4,454.0 L297.2,453.6 L294.0,453.2 L290.8,452.7 L287.6,452.2 L284.4,451.7 L281.2,451.2 L278.0,450.6 L274.8,450.0 L271.5,449.4 L268.3,448.8 L265.1,448.1 L262.0,447.4 L258.8,446.7 L255.6,446.0 L252.4,445.2 L249.3,444.4 L246.1,443.6 L243.0,442.8 L239.9,442.0 L236.8,441.1 L233.7,440.2 L230.6,439.3 L227.5,438.3 L224.5,437.4 L221.5,436.4 L218.4,435.4 L215.5,434.4 L212.5,433.3 L209.6,432.3 L206.6,431.2 L203.7,430.1 L200.9,429.0 L198.0,427.8 L195.2,426.7 L192.4,425.5 L189.6,424.3 L186.9,423.1 L184.2,421.9 L181.5,420.6 L178.9,419.4 L176.3,418.1 L173.7,416.8 L171.1,415.5 L168.6,414.2 L166.2,412.8 L163.7,411.5 L161.3,410.1 L158.9,408.8 L156.6,407.4 L154.3,406.0 L152.1,404.6 L149.9,403.1 L147.7,401.7 L145.6,400.3 L143.5,398.8 L141.5,397.4 L139.5,395.9 L137.5,394.4 L135.6,392.9 L133.8,391.4 L131.9,389.9 L130.2,388.4 L128.5,386.9 L126.8,385.4 L125.2,383.9 L123.6,382.3 L122.1,380.8 L120.6,379.3 L119.1,377.7 L117.8,376.2 L116.4,374.6 L115.2,373.1 L113.9,371.5 L112.8,370.0 L111.6,368.4 L110.6,366.9 L109.6,365.3 L108.6,363.8 L107.7,362.2 L106.9,360.7 L106.1,359.1 L105.3,357.6 L104.6,356.0 L104.0,354.5 L103.4,353.0 L102.9,351.4 L102.4,349.9 L102.0,348.4 L101.6,346.9 L101.3,345.4 L101.1,343.9 L100.9,342.4 L100.8,340.9 L100.7,339.4 L100.7,338.0 L100.7,336.5 L100.8,335.1 L100.9,333.6 L101.1,332.2 L101.4,330.8 L101.7,329.4 L102.1,328.0 L102.5,326.6 L103.0,325.3 L103.5,323.9 L104.1,322.6 L104.8,321.2 L105.5,319.9 L106.2,318.6 L107.0,317.3 L107.9,316.1 L108.8,314.8 L109.8,313.6 L110.8,312.4 L111.9,311.2 L113.0,310.0 L114.2,308.8 L115.4,307.7 L116.7,306.5 L118.1,305.4 L119.4,304.3 L120.9,303.2 L122.4,302.2 L123.9,301.2 L125.5,300.1 L127.1,299.1 L128.8,298.2 L130.6,297.2 L132.3,296.3 L134.2,295.4 L136.0,294.5 L137.9,293.6 L139.9,292.8 L141.9,292.0 L144.0,291.2 L146.0,290.4 L148.2,289.7 L150.4,288.9 L152.6,288.2 L154.8,287.6 L157.1,286.9 L159.5,286.3 L161.8,285.7 L164.2,285.1 L166.7,284.6 L169.2,284.0 L171.7,283.5 L174.2,283.1 L176.8,282.6 L179.4,282.2 L182.1,281.8 L184.8,281.4 L187.5,281.1 L190.2,280.8 L193.0,280.5 L195.8,280.2 L198.6,280.0 L201.5,279.8 L204.4,279.6 L207.3,279.4 L210.2,279.3 L213.1,279.2 L216.1,279.1 L219.1,279.1 L222.1,279.1 L225.1,279.1 L228.2,279.1 L231.3,279.2 L234.3,279.2 L237.4,279.4 L240.5,279.5 L243.7,279.7 L246.8,279.9 L250.0,280.1 L253.1,280.3 L256.3,280.6 L259.5,280.9 L262.6,281.2 L265.8,281.6 L269.0,282.0 L272.2,282.4 L275.4,282.8 L278.7,283.3 L281.9,283.8 L285.1,284.3 L288.3,284.8 L291.5,285.4 L294.7,286.0 L297.9,286.6 L301.1,287.2 L304.3,287.9 L307.5,288.6 L310.7,289.3 L313.9,290.0 L317.0,290.8 L320.2,291.5 L323.3,292.3 L326.5,293.2 L329.6,294.0 L332.7,294.9 L335.8,295.8 L338.9,296.7 L341.9,297.6 L345.0,298.6 L348.0,299.6 L351.0,300.6 L354.0,301.6 L357.0,302.7 L359.9,303.7 L362.8,304.8 L365.7,305.9 L368.6,307.0 L371.5,308.2 L374.3,309.3 L377.1,310.5 L379.8,311.7 L382.6,312.9 L385.3,314.1 L388.0,315.4 L390.6,316.6 L393.2,317.9 L395.8,319.2 L398.3,320.5 L400.8,321.8 L403.3,323.2 L405.8,324.5 L408.2,325.9 L410.5,327.2 L412.8,328.6 L415.1,330.0 L417.4,331.4 L419.6,332.8 L421.8,334.3 L423.9,335.7 L426.0,337.2 L428.0,338.6 L430.0,340.1 L431.9,341.6 L433.9,343.1 L435.7,344.6 L437.5,346.1 L439.3,347.6 L441.0,349.1 L442.7,350.6 L444.3,352.1 L445.9,353.7 L447.4,355.2 L448.9,356.7 L450.3,358.3 L451.7,359.8 L453.0,361.4 L454.3,362.9 L455.5,364.5 L456.7,366.0 L457.8,367.6 L458.9,369.1 L459.9,370.7 L460.9,372.2 L461.8,373.8 L462.6,375.3 L463.4,376.9 L464.2,378.4 L464.9,379.9 L465.5,381.5 L466.1,383.0 L466.6,384.5 L467.1,386.1 L467.5,387.6 L467.8,389.1 L468.1,390.6 L468.4,392.1 L468.6,393.6 L468.7,395.1 L468.8,396.5 L468.8,398.0 L468.8,399.5 L468.7,400.9 L468.5,402.3 L468.3,403.8 Z"/></clipPath>
<defs><pattern id="rs" width="6" height="3" patternUnits="userSpaceOnUse"><rect width="6" height="3" fill="#b73737"/><rect y="2" width="6" height="1" fill="#9e2626"/></pattern></defs>
<g clip-path="url(#fc)"><path d="M468.1,405.2 L467.8,406.6 L467.4,408.0 L467.0,409.4 L466.5,410.7 L465.9,412.1 L465.4,413.4 L464.7,414.8 L464.0,416.1 L463.2,417.4 L462.4,418.7 L461.6,419.9 L460.7,421.2 L459.7,422.4 L458.7,423.6 L457.6,424.8 L456.5,426.0 L455.3,427.2 L454.0,428.3 L452.7,429.5 L451.4,430.6 L450.0,431.7 L448.6,432.7 L447.1,433.8 L445.6,434.8 L444.0,435.8 L442.3,436.8 L440.6,437.8 L438.9,438.8 L437.1,439.7 L435.3,440.6 L433.4,441.5 L431.5,442.3 L429.6,443.2 L427.6,444.0 L425.5,444.8 L423.4,445.6 L421.3,446.3 L419.1,447.0 L416.9,447.7 L414.6,448.4 L412.3,449.1 L410.0,449.7 L407.6,450.3 L405.2,450.9 L402.8,451.4 L400.3,451.9 L397.8,452.4 L395.2,452.9 L392.6,453.4 L390.0,453.8 L387.4,454.2 L384.7,454.6 L382.0,454.9 L379.2,455.2 L376.5,455.5 L373.7,455.8 L370.8,456.0 L368.0,456.2 L365.1,456.4 L362.2,456.6 L359.3,456.7 L356.3,456.8 L353.4,456.9 L350.4,456.9 L347.4,456.9 L344.3,456.9 L341.3,456.9 L338.2,456.8 L335.1,456.7 L332.0,456.6 L328.9,456.5 L325.8,456.3 L322.7,456.1 L319.5,455.9 L316.4,455.7 L313.2,455.4 L310.0,455.1 L306.8,454.7 L303.6,454.4 L300.4,454.0 L297.2,453.6 L294.0,453.2 L290.8,452.7 L287.6,452.2 L284.4,451.7 L281.2,451.2 L278.0,450.6 L274.8,450.0 L271.5,449.4 L268.3,448.8 L265.1,448.1 L262.0,447.4 L258.8,446.7 L255.6,446.0 L252.4,445.2 L249.3,444.4 L246.1,443.6 L243.0,442.8 L239.9,442.0 L236.8,441.1 L233.7,440.2 L230.6,439.3 L227.5,438.3 L224.5,437.4 L221.5,436.4 L218.4,435.4 L215.5,434.4 L212.5,433.3 L209.6,432.3 L206.6,431.2 L203.7,430.1 L200.9,429.0 L198.0,427.8 L195.2,426.7 L192.4,425.5 L189.6,424.3 L186.9,423.1 L184.2,421.9 L181.5,420.6 L178.9,419.4 L176.3,418.1 L173.7,416.8 L171.1,415.5 L168.6,414.2 L166.2,412.8 L163.7,411.5 L161.3,410.1 L158.9,408.8 L156.6,407.4 L154.3,406.0 L152.1,404.6 L149.9,403.1 L147.7,401.7 L145.6,400.3 L143.5,398.8 L141.5,397.4 L139.5,395.9 L137.5,394.4 L135.6,392.9 L133.8,391.4 L131.9,389.9 L130.2,388.4 L128.5,386.9 L126.8,385.4 L125.2,383.9 L123.6,382.3 L122.1,380.8 L120.6,379.3 L119.1,377.7 L117.8,376.2 L116.4,374.6 L115.2,373.1 L113.9,371.5 L112.8,370.0 L111.6,368.4 L110.6,366.9 L109.6,365.3 L108.6,363.8 L107.7,362.2 L106.9,360.7 L106.1,359.1 L105.3,357.6 L104.6,356.0 L104.0,354.5 L103.4,353.0 L102.9,351.4 L102.4,349.9 L102.0,348.4 L101.6,346.9 L101.3,345.4 L101.1,343.9 L100.9,342.4 L100.8,340.9 L100.7,339.4 L100.7,338.0 L100.7,336.5 L100.8,335.1 L100.9,333.6 L101.1,332.2 L101.4,330.8 L101.7,329.4 L102.1,328.0 L102.5,326.6 L103.0,325.3 L103.5,323.9 L104.1,322.6 L104.8,321.2 L105.5,319.9 L106.2,318.6 L107.0,317.3 L107.9,316.1 L108.8,314.8 L109.8,313.6 L110.8,312.4 L111.9,311.2 L113.0,310.0 L114.2,308.8 L115.4,307.7 L116.7,306.5 L118.1,305.4 L119.4,304.3 L120.9,303.2 L122.4,302.2 L123.9,301.2 L125.5,300.1 L127.1,299.1 L128.8,298.2 L130.6,297.2 L132.3,296.3 L134.2,295.4 L136.0,294.5 L137.9,293.6 L139.9,292.8 L141.9,292.0 L144.0,291.2 L146.0,290.4 L148.2,289.7 L150.4,288.9 L152.6,288.2 L154.8,287.6 L157.1,286.9 L159.5,286.3 L161.8,285.7 L164.2,285.1 L166.7,284.6 L169.2,284.0 L171.7,283.5 L174.2,283.1 L176.8,282.6 L179.4,282.2 L182.1,281.8 L184.8,281.4 L187.5,281.1 L190.2,280.8 L193.0,280.5 L195.8,280.2 L198.6,280.0 L201.5,279.8 L204.4,279.6 L207.3,279.4 L210.2,279.3 L213.1,279.2 L216.1,279.1 L219.1,279.1 L222.1,279.1 L225.1,279.1 L228.2,279.1 L231.3,279.2 L234.3,279.2 L237.4,279.4 L240.5,279.5 L243.7,279.7 L246.8,279.9 L250.0,280.1 L253.1,280.3 L256.3,280.6 L259.5,280.9 L262.6,281.2 L265.8,281.6 L269.0,282.0 L272.2,282.4 L275.4,282.8 L278.7,283.3 L281.9,283.8 L285.1,284.3 L288.3,284.8 L291.5,285.4 L294.7,286.0 L297.9,286.6 L301.1,287.2 L304.3,287.9 L307.5,288.6 L310.7,289.3 L313.9,290.0 L317.0,290.8 L320.2,291.5 L323.3,292.3 L326.5,293.2 L329.6,294.0 L332.7,294.9 L335.8,295.8 L338.9,296.7 L341.9,297.6 L345.0,298.6 L348.0,299.6 L351.0,300.6 L354.0,301.6 L357.0,302.7 L359.9,303.7 L362.8,304.8 L365.7,305.9 L368.6,307.0 L371.5,308.2 L374.3,309.3 L377.1,310.5 L379.8,311.7 L382.6,312.9 L385.3,314.1 L388.0,315.4 L390.6,316.6 L393.2,317.9 L395.8,319.2 L398.3,320.5 L400.8,321.8 L403.3,323.2 L405.8,324.5 L408.2,325.9 L410.5,327.2 L412.8,328.6 L415.1,330.0 L417.4,331.4 L419.6,332.8 L421.8,334.3 L423.9,335.7 L426.0,337.2 L428.0,338.6 L430.0,340.1 L431.9,341.6 L433.9,343.1 L435.7,344.6 L437.5,346.1 L439.3,347.6 L441.0,349.1 L442.7,350.6 L444.3,352.1 L445.9,353.7 L447.4,355.2 L448.9,356.7 L450.3,358.3 L451.7,359.8 L453.0,361.4 L454.3,362.9 L455.5,364.5 L456.7,366.0 L457.8,367.6 L458.9,369.1 L459.9,370.7 L460.9,372.2 L461.8,373.8 L462.6,375.3 L463.4,376.9 L464.2,378.4 L464.9,379.9 L465.5,381.5 L466.1,383.0 L466.6,384.5 L467.1,386.1 L467.5,387.6 L467.8,389.1 L468.1,390.6 L468.4,392.1 L468.6,393.6 L468.7,395.1 L468.8,396.5 L468.8,398.0 L468.8,399.5 L468.7,400.9 L468.5,402.3 L468.3,403.8 Z" fill="url(#rs)"/><g clip-path="url(#dc)"><g fill="none" stroke="#9a2222" stroke-width="1.4" opacity="0.35"><ellipse cx="281.0" cy="352.0" rx="34.0" ry="13.6" transform="rotate(9 281.0 352.0)"/><ellipse cx="280.9" cy="352.3" rx="37.6" ry="15.0" transform="rotate(9 280.9 352.3)"/><ellipse cx="280.8" cy="352.6" rx="41.2" ry="16.5" transform="rotate(9 280.8 352.6)"/><ellipse cx="280.6" cy="352.8" rx="44.8" ry="17.9" transform="rotate(9 280.6 352.8)"/><ellipse cx="280.5" cy="353.1" rx="48.4" ry="19.4" transform="rotate(9 280.5 353.1)"/><ellipse cx="280.4" cy="353.4" rx="52.0" ry="20.8" transform="rotate(9 280.4 353.4)"/><ellipse cx="280.3" cy="353.7" rx="55.6" ry="22.2" transform="rotate(9 280.3 353.7)"/><ellipse cx="280.2" cy="354.0" rx="59.2" ry="23.7" transform="rotate(9 280.2 354.0)"/><ellipse cx="280.0" cy="354.2" rx="62.8" ry="25.1" transform="rotate(9 280.0 354.2)"/><ellipse cx="279.9" cy="354.5" rx="66.4" ry="26.6" transform="rotate(9 279.9 354.5)"/><ellipse cx="279.8" cy="354.8" rx="70.0" ry="28.0" transform="rotate(9 279.8 354.8)"/><ellipse cx="279.7" cy="355.1" rx="73.6" ry="29.4" transform="rotate(9 279.7 355.1)"/><ellipse cx="279.6" cy="355.4" rx="77.2" ry="30.9" transform="rotate(9 279.6 355.4)"/><ellipse cx="279.4" cy="355.6" rx="80.8" ry="32.3" transform="rotate(9 279.4 355.6)"/><ellipse cx="279.3" cy="355.9" rx="84.4" ry="33.8" transform="rotate(9 279.3 355.9)"/><ellipse cx="279.2" cy="356.2" rx="88.0" ry="35.2" transform="rotate(9 279.2 356.2)"/><ellipse cx="279.1" cy="356.5" rx="91.6" ry="36.6" transform="rotate(9 279.1 356.5)"/><ellipse cx="279.0" cy="356.8" rx="95.2" ry="38.1" transform="rotate(9 279.0 356.8)"/><ellipse cx="278.8" cy="357.0" rx="98.8" ry="39.5" transform="rotate(9 278.8 357.0)"/><ellipse cx="278.7" cy="357.3" rx="102.4" ry="41.0" transform="rotate(9 278.7 357.3)"/><ellipse cx="278.6" cy="357.6" rx="106.0" ry="42.4" transform="rotate(9 278.6 357.6)"/><ellipse cx="278.5" cy="357.9" rx="109.6" ry="43.8" transform="rotate(9 278.5 357.9)"/><ellipse cx="278.4" cy="358.2" rx="113.2" ry="45.3" transform="rotate(9 278.4 358.2)"/><ellipse cx="278.2" cy="358.4" rx="116.8" ry="46.7" transform="rotate(9 278.2 358.4)"/><ellipse cx="278.1" cy="358.7" rx="120.4" ry="48.2" transform="rotate(9 278.1 358.7)"/><ellipse cx="278.0" cy="359.0" rx="124.0" ry="49.6" transform="rotate(9 278.0 359.0)"/></g></g><path d="M249.0,320.0 Q205.0,334.0 182.0,356.0 Q205.0,361.0 242.0,360.0 M248.0,326.0 Q214.0,339.0 195.0,354.5 Q215.0,360.0 243.0,358.5 M247.0,332.0 Q223.0,344.0 208.0,353.0 Q225.0,359.0 244.0,357.0 M246.0,338.0 Q232.0,349.0 221.0,351.5 Q235.0,358.0 245.0,355.5 M322.0,302.0 Q360.0,306.0 400.0,322.0 M325.0,307.0 Q368.0,312.0 412.0,331.0 M328.0,312.0 Q376.0,318.0 424.0,340.0 M331.0,317.0 Q384.0,324.0 436.0,349.0" stroke="#8a1a1a" stroke-width="3.2" fill="none" opacity="0.55"/></g>
<path d="M101.4,330.6 L101.7,329.6 L101.9,328.5 L102.2,327.5 L102.6,326.4 L102.9,325.4 L103.3,324.4 L103.7,323.4 L104.2,322.4 L104.7,321.4 L105.2,320.4 L105.7,319.4 L106.3,318.5 L106.9,317.5 L107.6,316.5 L108.2,315.6 L108.9,314.7 L109.7,313.7 L110.4,312.8 L111.2,311.9 L112.0,311.0 L112.9,310.1 L113.8,309.2 L114.7,308.4 L115.6,307.5 L116.6,306.7 L117.6,305.8 L118.6,305.0 L119.6,304.2 L120.7,303.4 L121.8,302.6 L122.9,301.8 L124.1,301.0 L125.3,300.3 L126.5,299.5 L127.8,298.8 L129.0,298.1 L130.3,297.3 L131.7,296.6 L133.0,296.0 L134.4,295.3 L135.8,294.6 L137.2,294.0 L138.7,293.3 L140.2,292.7 L141.7,292.1 L143.2,291.5 L144.7,290.9 L146.3,290.3 L147.9,289.8 L149.5,289.2 L151.2,288.7 L152.9,288.2 L154.5,287.7 L156.3,287.2 L158.0,286.7 L159.8,286.2 L161.5,285.8 L163.3,285.3 L165.2,284.9 L167.0,284.5 L168.9,284.1 L170.7,283.7 L172.6,283.4 L174.6,283.0 L176.5,282.7 L178.5,282.4 L180.4,282.0 L182.4,281.8 L184.4,281.5 L186.5,281.2 L188.5,281.0 L190.6,280.7 L192.7,280.5 L194.7,280.3 L196.9,280.1 L199.0,280.0 L201.1,279.8 L203.3,279.7 L205.4,279.5 L207.6,279.4 L209.8,279.3 L212.0,279.2 L214.2,279.2 L216.5,279.1 L218.7,279.1 L221.0,279.1 L223.2,279.1 L225.5,279.1 L227.8,279.1 L230.1,279.1 L232.4,279.2 L234.7,279.3 L237.0,279.3 L239.4,279.4 L241.7,279.6 L244.1,279.7 L246.4,279.8 L248.8,280.0 L251.1,280.2 L253.5,280.4 L255.9,280.6 L258.3,280.8 L260.7,281.0 L263.0,281.3 L265.4,281.6 L267.8,281.8 L270.2,282.1 L272.6,282.4 L275.0,282.8 L277.5,283.1 L279.9,283.5 L282.3,283.8 L284.7,284.2 L287.1,284.6 L289.5,285.0 L291.9,285.4 L294.3,285.9 L296.7,286.3 L299.1,286.8 L301.5,287.3 L303.9,287.8 L306.3,288.3 L308.7,288.8 L311.1,289.4 L313.5,289.9 L315.9,290.5 L318.2,291.0 L320.6,291.6 L323.0,292.2 L325.3,292.9 L327.7,293.5 L330.0,294.1 L332.3,294.8 L334.6,295.5 L337.0,296.1 L339.3,296.8 L341.6,297.5 L343.9,298.2 L346.1,299.0 L348.4,299.7 L350.6,300.5 L352.9,301.2 L355.1,302.0 L357.3,302.8 L359.6,303.6 L361.7,304.4 L363.9,305.2 L366.1,306.0 L368.3,306.9 L370.4,307.7 L372.5,308.6 L374.6,309.5 L376.7,310.4 L378.8,311.2 L380.9,312.1 L382.9,313.1 L384.9,314.0 L387.0,314.9 L388.9,315.8 L390.9,316.8 L392.9,317.7 L394.8,318.7 L396.7,319.7 L398.6,320.7 L400.5,321.7 L402.4,322.7 L404.2,323.7 L406.1,324.7 L407.9,325.7 L409.6,326.7 L411.4,327.8 L413.1,328.8 L414.9,329.8 L416.5,330.9 L418.2,332.0 L419.9,333.0 L421.5,334.1 L423.1,335.2 L424.7,336.3 L426.2,337.4 L427.7,338.4 L429.3,339.6 L430.7,340.7 L432.2,341.8 L433.6,342.9 L435.0,344.0 L436.4,345.1 L437.8,346.2 L439.1,347.4 L440.4,348.5 L441.6,349.7 L442.9,350.8 L444.1,351.9 L445.3,353.1 L446.5,354.2 L447.6,355.4 L448.7,356.5 L449.8,357.7 L450.8,358.8 L451.9,360.0 L452.9,361.2 L453.8,362.3 L454.8,363.5 L455.7,364.7 L456.6,365.8 L457.4,367.0 L458.2,368.1 L459.0,369.3 L459.8,370.5 L460.5,371.6 L461.2,372.8 L461.9,374.0 L462.5,375.1 L463.1,376.3 L463.7,377.4 L464.3,378.6 L464.8,379.8 L465.3,380.9 L465.7,382.1 L466.1,383.2 L466.5,384.3 L466.9,385.5 L467.2,386.6 L467.5,387.8 L467.8,388.9 L468.0,390.0 L468.2,390.8 L468.3,391.3 L468.3,391.9 L468.4,392.5 L468.5,393.0 L468.6,393.6 L468.6,394.1 L468.7,394.7 L468.7,395.3 L468.7,395.8 L468.8,396.4 L468.8,396.9 L468.8,397.5" stroke="#c48a38" stroke-width="4.4" fill="none"/>
<path d="M101.4,330.6 L101.7,329.6 L101.9,328.5 L102.2,327.5 L102.6,326.4 L102.9,325.4 L103.3,324.4 L103.7,323.4 L104.2,322.4 L104.7,321.4 L105.2,320.4 L105.7,319.4 L106.3,318.5 L106.9,317.5 L107.6,316.5 L108.2,315.6 L108.9,314.7 L109.7,313.7 L110.4,312.8 L111.2,311.9 L112.0,311.0 L112.9,310.1 L113.8,309.2 L114.7,308.4 L115.6,307.5 L116.6,306.7 L117.6,305.8 L118.6,305.0 L119.6,304.2 L120.7,303.4 L121.8,302.6 L122.9,301.8 L124.1,301.0 L125.3,300.3 L126.5,299.5 L127.8,298.8 L129.0,298.1 L130.3,297.3 L131.7,296.6 L133.0,296.0 L134.4,295.3 L135.8,294.6 L137.2,294.0 L138.7,293.3 L140.2,292.7 L141.7,292.1 L143.2,291.5 L144.7,290.9 L146.3,290.3 L147.9,289.8 L149.5,289.2 L151.2,288.7 L152.9,288.2 L154.5,287.7 L156.3,287.2 L158.0,286.7 L159.8,286.2 L161.5,285.8 L163.3,285.3 L165.2,284.9 L167.0,284.5 L168.9,284.1 L170.7,283.7 L172.6,283.4 L174.6,283.0 L176.5,282.7 L178.5,282.4 L180.4,282.0 L182.4,281.8 L184.4,281.5 L186.5,281.2 L188.5,281.0 L190.6,280.7 L192.7,280.5 L194.7,280.3 L196.9,280.1 L199.0,280.0 L201.1,279.8 L203.3,279.7 L205.4,279.5 L207.6,279.4 L209.8,279.3 L212.0,279.2 L214.2,279.2 L216.5,279.1 L218.7,279.1 L221.0,279.1 L223.2,279.1 L225.5,279.1 L227.8,279.1 L230.1,279.1 L232.4,279.2 L234.7,279.3 L237.0,279.3 L239.4,279.4 L241.7,279.6 L244.1,279.7 L246.4,279.8 L248.8,280.0 L251.1,280.2 L253.5,280.4 L255.9,280.6 L258.3,280.8 L260.7,281.0 L263.0,281.3 L265.4,281.6 L267.8,281.8 L270.2,282.1 L272.6,282.4 L275.0,282.8 L277.5,283.1 L279.9,283.5 L282.3,283.8 L284.7,284.2 L287.1,284.6 L289.5,285.0 L291.9,285.4 L294.3,285.9 L296.7,286.3 L299.1,286.8 L301.5,287.3 L303.9,287.8 L306.3,288.3 L308.7,288.8 L311.1,289.4 L313.5,289.9 L315.9,290.5 L318.2,291.0 L320.6,291.6 L323.0,292.2 L325.3,292.9 L327.7,293.5 L330.0,294.1 L332.3,294.8 L334.6,295.5 L337.0,296.1 L339.3,296.8 L341.6,297.5 L343.9,298.2 L346.1,299.0 L348.4,299.7 L350.6,300.5 L352.9,301.2 L355.1,302.0 L357.3,302.8 L359.6,303.6 L361.7,304.4 L363.9,305.2 L366.1,306.0 L368.3,306.9 L370.4,307.7 L372.5,308.6 L374.6,309.5 L376.7,310.4 L378.8,311.2 L380.9,312.1 L382.9,313.1 L384.9,314.0 L387.0,314.9 L388.9,315.8 L390.9,316.8 L392.9,317.7 L394.8,318.7 L396.7,319.7 L398.6,320.7 L400.5,321.7 L402.4,322.7 L404.2,323.7 L406.1,324.7 L407.9,325.7 L409.6,326.7 L411.4,327.8 L413.1,328.8 L414.9,329.8 L416.5,330.9 L418.2,332.0 L419.9,333.0 L421.5,334.1 L423.1,335.2 L424.7,336.3 L426.2,337.4 L427.7,338.4 L429.3,339.6 L430.7,340.7 L432.2,341.8 L433.6,342.9 L435.0,344.0 L436.4,345.1 L437.8,346.2 L439.1,347.4 L440.4,348.5 L441.6,349.7 L442.9,350.8 L444.1,351.9 L445.3,353.1 L446.5,354.2 L447.6,355.4 L448.7,356.5 L449.8,357.7 L450.8,358.8 L451.9,360.0 L452.9,361.2 L453.8,362.3 L454.8,363.5 L455.7,364.7 L456.6,365.8 L457.4,367.0 L458.2,368.1 L459.0,369.3 L459.8,370.5 L460.5,371.6 L461.2,372.8 L461.9,374.0 L462.5,375.1 L463.1,376.3 L463.7,377.4 L464.3,378.6 L464.8,379.8 L465.3,380.9 L465.7,382.1 L466.1,383.2 L466.5,384.3 L466.9,385.5 L467.2,386.6 L467.5,387.8 L467.8,388.9 L468.0,390.0 L468.2,390.8 L468.3,391.3 L468.3,391.9 L468.4,392.5 L468.5,393.0 L468.6,393.6 L468.6,394.1 L468.7,394.7 L468.7,395.3 L468.7,395.8 L468.8,396.4 L468.8,396.9 L468.8,397.5" stroke="#e8c254" stroke-width="3.2" fill="none" stroke-dasharray="1.3,1.1"/>
<path d="M256.8,305 L242.3,362.8 C244,376 262,384 274.7,384 C290,384 303,378 305,371.7 L318.4,310 Z" fill="#ba5b29"/>
<ellipse cx="287.6" cy="305.2" rx="30.8" ry="15.2" transform="rotate(3 287.6 305.2)" fill="#c06230" stroke="#e6b080" stroke-width="0.9" stroke-dasharray="2,1.4"/>
<path d="M246.8,331.5 C250,348 268,356 278,355 C295,354 308,350 310.5,345" fill="none" stroke="#eab888" stroke-width="0.9" stroke-dasharray="2,1.4"/>
<path d="M305,295.7 L299.4,319" stroke="#f2d6b8" stroke-width="0.9"/>
<path d="M97.1,327.5 L97.6,328.8 L98.2,330.1 L98.8,331.3 L99.5,332.6 L100.2,333.9 L100.9,335.2 L101.7,336.4 L102.5,337.7 L103.3,339.0 L104.2,340.2 L105.1,341.5 L106.0,342.8 L106.9,344.0 L107.9,345.3 L108.9,346.6 L110.0,347.8 L111.0,349.1 L112.2,350.3 L113.3,351.6 L114.5,352.8 L115.7,354.0 L116.9,355.3 L118.1,356.5 L119.4,357.7 L120.8,359.0 L122.1,360.2 L123.5,361.4 L124.9,362.6 L126.3,363.8 L127.8,365.0 L129.3,366.2 L130.8,367.4 L132.3,368.5 L133.9,369.7 L135.5,370.9 L137.1,372.0 L138.8,373.2 L140.4,374.3 L142.1,375.5 L143.9,376.6 L145.6,377.7 L147.4,378.8 L149.2,379.9 L151.0,381.0 L152.9,382.1 L154.7,383.2 L156.6,384.3 L158.5,385.3 L160.5,386.4 L162.4,387.4 L164.4,388.5 L166.4,389.5 L168.5,390.5 L170.5,391.5 L172.6,392.5 L174.7,393.5 L176.8,394.4 L178.9,395.4 L181.1,396.3 L183.2,397.3 L185.4,398.2 L187.6,399.1 L189.8,400.0 L192.1,400.9 L194.3,401.8 L196.6,402.7 L198.9,403.5 L201.2,404.4 L203.5,405.2 L205.8,406.0 L208.2,406.8 L210.6,407.6 L212.9,408.4 L215.3,409.2 L217.7,409.9 L220.1,410.7 L222.6,411.4 L225.0,412.1 L227.5,412.8 L229.9,413.5 L232.4,414.1 L234.9,414.8 L237.4,415.4 L239.9,416.1 L242.4,416.7 L244.9,417.3 L247.4,417.9 L249.9,418.4 L252.5,419.0 L255.0,419.5 L257.6,420.0 L260.1,420.5 L262.7,421.0 L265.2,421.5 L267.8,422.0 L270.4,422.4 L273.0,422.9 L275.5,423.3 L278.1,423.7 L280.7,424.0 L283.3,424.4 L285.9,424.8 L288.5,425.1 L291.1,425.4 L293.7,425.7 L296.2,426.0 L298.8,426.3 L301.4,426.5 L304.0,426.8 L306.6,427.0 L309.2,427.2 L311.7,427.4 L314.3,427.6 L316.9,427.7 L319.4,427.8 L322.0,428.0 L324.6,428.1 L327.1,428.2 L329.6,428.2 L332.2,428.3 L334.7,428.3 L337.2,428.4 L339.7,428.4 L342.2,428.3 L344.7,428.3 L347.2,428.3 L349.7,428.2 L352.2,428.1 L354.6,428.0 L357.1,427.9 L359.5,427.8 L361.9,427.7 L364.3,427.5 L366.7,427.3 L369.1,427.1 L371.5,426.9 L373.8,426.7 L376.2,426.4 L378.5,426.2 L380.8,425.9 L383.1,425.6 L385.4,425.3 L387.6,425.0 L389.9,424.6 L392.1,424.3 L394.3,423.9 L396.5,423.5 L398.7,423.1 L400.8,422.7 L403.0,422.3 L405.1,421.8 L407.2,421.4 L409.3,420.9 L411.3,420.4 L413.4,419.9 L415.4,419.3 L417.4,418.8 L419.4,418.2 L421.3,417.7 L423.3,417.1 L425.2,416.5 L427.0,415.9 L428.9,415.2 L430.7,414.6 L432.6,413.9 L434.3,413.2 L436.1,412.6 L437.8,411.8 L439.6,411.1 L441.2,410.4 L442.9,409.7 L444.5,408.9 L446.2,408.1 L447.7,407.3 L449.3,406.6 L450.8,405.7 L452.3,404.9 L453.8,404.1 L455.2,403.2 L456.7,402.4 L458.0,401.5 L459.4,400.6 L460.7,399.7 L462.0,398.8 L463.3,397.9 L464.5,397.0 L465.8,396.0 L466.9,395.1 L468.1,394.1 L469.2,393.1 L470.3,392.1 L471.4,391.1 L472.4,390.1 L473.4,389.1 L474.4,388.1 L475.3,387.1 L476.2,386.0 L477.1,385.0 L477.9,383.9 L478.7,382.8 L479.5,381.7 L480.2,380.7 L481.0,379.6 L481.6,378.4 L482.3,377.3 L482.9,376.2 L483.5,375.1" stroke="#d29a3c" stroke-width="5.5" fill="none" stroke-dasharray="1.6,1"/>
<path d="M94.0,335.2 L94.2,336.5 L94.5,337.7 L94.8,339.0 L95.1,340.3 L95.4,341.5 L95.8,342.8 L96.2,344.1 L96.7,345.3 L97.1,346.6 L97.6,347.9 L98.2,349.2 L98.8,350.4 L99.4,351.7 L100.0,353.0 L100.7,354.3 L101.4,355.5 L102.1,356.8 L102.9,358.1 L103.7,359.3 L104.5,360.6 L105.4,361.9 L106.3,363.1 L107.2,364.4 L108.2,365.7 L109.2,366.9 L110.2,368.2 L111.2,369.4 L112.3,370.7 L113.4,371.9 L114.6,373.2 L115.7,374.4 L116.9,375.6 L118.2,376.8 L119.4,378.1 L120.7,379.3 L122.0,380.5 L123.4,381.7 L124.7,382.9 L126.1,384.1 L127.5,385.3 L129.0,386.5 L130.5,387.7 L132.0,388.8 L133.5,390.0 L135.1,391.1 L136.7,392.3 L138.3,393.4 L139.9,394.6 L141.6,395.7 L143.3,396.8 L145.0,397.9 L146.7,399.0 L148.5,400.1 L150.3,401.2 L152.1,402.3 L153.9,403.4 L155.8,404.4 L157.7,405.5 L159.6,406.5 L161.5,407.5 L163.4,408.6 L165.4,409.6 L167.4,410.6 L169.4,411.6 L171.4,412.5 L173.5,413.5 L175.5,414.5 L177.6,415.4 L179.7,416.3 L181.9,417.3 L184.0,418.2 L186.2,419.1 L188.3,420.0 L190.5,420.8 L192.7,421.7 L195.0,422.6 L197.2,423.4 L199.5,424.2 L201.7,425.0 L204.0,425.8 L206.3,426.6 L208.7,427.4 L211.0,428.2 L213.3,428.9 L215.7,429.6 L218.1,430.4 L220.4,431.1 L222.8,431.8 L225.2,432.4 L227.7,433.1 L230.1,433.8 L232.5,434.4 L235.0,435.0 L237.4,435.6 L239.9,436.2 L242.3,436.8 L244.8,437.3 L247.3,437.9 L249.8,438.4 L252.3,438.9 L254.8,439.4 L257.3,439.9 L259.8,440.4 L262.3,440.9 L264.9,441.3 L267.4,441.7 L269.9,442.1 L272.5,442.5 L275.0,442.9 L277.6,443.2 L280.1,443.6 L282.6,443.9 L285.2,444.2 L287.7,444.5 L290.3,444.8 L292.8,445.1 L295.4,445.3 L297.9,445.5 L300.4,445.8 L303.0,446.0 L305.5,446.1 L308.1,446.3 L310.6,446.4 L310.0,471.9 L307.4,471.8 L304.8,471.6 L302.2,471.4 L299.6,471.1 L297.0,470.9 L294.4,470.6 L291.9,470.3 L289.3,470.0 L286.7,469.7 L284.1,469.4 L281.5,469.1 L278.9,468.7 L276.3,468.3 L273.7,467.9 L271.1,467.5 L268.5,467.1 L265.9,466.6 L263.3,466.2 L260.8,465.7 L258.2,465.2 L255.6,464.7 L253.1,464.1 L250.5,463.6 L248.0,463.0 L245.4,462.5 L242.9,461.9 L240.3,461.3 L237.8,460.7 L235.3,460.0 L232.8,459.4 L230.3,458.7 L227.8,458.0 L225.3,457.3 L222.9,456.6 L220.4,455.9 L218.0,455.1 L215.5,454.4 L213.1,453.6 L210.7,452.8 L208.3,452.0 L205.9,451.2 L203.5,450.4 L201.2,449.6 L198.8,448.7 L196.5,447.8 L194.2,447.0 L191.9,446.1 L189.6,445.2 L187.4,444.3 L185.1,443.3 L182.9,442.4 L180.7,441.4 L178.5,440.5 L176.3,439.5 L174.1,438.5 L172.0,437.5 L169.9,436.5 L167.8,435.5 L165.7,434.4 L163.6,433.4 L161.6,432.3 L159.6,431.3 L157.6,430.2 L155.6,429.1 L153.7,428.0 L151.7,426.9 L149.8,425.8 L148.0,424.7 L146.1,423.5 L144.3,422.4 L142.4,421.2 L140.7,420.1 L138.9,418.9 L137.2,417.7 L135.5,416.5 L133.8,415.4 L132.1,414.2 L130.5,413.0 L128.9,411.7 L127.3,410.5 L125.7,409.3 L124.2,408.1 L122.7,406.8 L121.2,405.6 L119.8,404.3 L118.4,403.1 L117.0,401.8 L115.6,400.5 L114.3,399.3 L113.0,398.0 L111.8,396.7 L110.5,395.4 L109.3,394.1 L108.1,392.8 L107.0,391.5 L105.9,390.2 L104.8,388.9 L103.7,387.6 L102.7,386.3 L101.7,385.0 L100.8,383.7 L99.8,382.3 L98.9,381.0 L98.1,379.7 Z" fill="#a83030"/><path d="M354.6,446.3 L357.0,446.1 L359.4,445.9 L361.7,445.7 L364.1,445.5 L366.4,445.3 L368.8,445.0 L371.1,444.8 L373.4,444.5 L375.6,444.2 L377.9,443.9 L380.1,443.6 L382.4,443.2 L384.6,442.8 L386.8,442.5 L389.0,442.1 L391.1,441.7 L393.3,441.2 L395.4,440.8 L397.5,440.3 L399.6,439.9 L401.7,439.4 L403.7,438.9 L405.8,438.4 L407.8,437.8 L409.8,437.3 L411.8,436.7 L413.7,436.1 L415.6,435.5 L417.5,434.9 L419.4,434.3 L421.3,433.7 L423.1,433.0 L424.9,432.4 L426.7,431.7 L428.5,431.0 L430.3,430.3 L432.0,429.6 L433.7,428.8 L435.3,428.1 L437.0,427.3 L438.6,426.5 L440.2,425.7 L441.8,424.9 L443.3,424.1 L444.8,423.3 L444.8,450.1 L443.2,450.9 L441.6,451.7 L440.0,452.5 L438.4,453.3 L436.7,454.1 L435.0,454.9 L433.3,455.6 L431.6,456.3 L429.8,457.1 L428.0,457.8 L426.2,458.4 L424.4,459.1 L422.5,459.8 L420.6,460.4 L418.7,461.0 L416.8,461.7 L414.8,462.3 L412.8,462.8 L410.8,463.4 L408.8,464.0 L406.8,464.5 L404.7,465.0 L402.6,465.5 L400.5,466.0 L398.4,466.5 L396.3,466.9 L394.1,467.3 L391.9,467.8 L389.7,468.2 L387.5,468.6 L385.3,468.9 L383.0,469.3 L380.7,469.6 L378.5,469.9 L376.2,470.2 L373.8,470.5 L371.5,470.8 L369.2,471.0 L366.8,471.3 L364.4,471.5 L362.0,471.7 L359.6,471.9 L357.2,472.1 L354.8,472.2 Z" fill="#a83030"/>
<path d="M100.1,376.3 L101.1,377.6 L102.0,378.9 L103.0,380.2 L104.1,381.5 L105.1,382.8 L106.2,384.2 L107.4,385.5 L108.5,386.8 L109.7,388.0 L110.9,389.3 L112.2,390.6 L113.5,391.9 L114.8,393.2 L116.1,394.5 L117.5,395.7 L118.9,397.0 L120.3,398.2 L121.7,399.5 L123.2,400.7 L124.7,402.0 L126.3,403.2 L127.8,404.4 L129.4,405.6 L131.0,406.9 L132.7,408.1 L134.3,409.3 L136.0,410.4 L137.7,411.6 L139.5,412.8 L141.3,414.0 L143.0,415.1 L144.9,416.3 L146.7,417.4 L148.6,418.5 L150.5,419.7 L152.4,420.8 L154.3,421.9 L156.3,423.0 L158.3,424.1 L160.3,425.1 L162.3,426.2 L164.3,427.2 L166.4,428.3 L168.5,429.3 L170.6,430.3 L172.7,431.3 L174.9,432.3 L177.0,433.3 L179.2,434.3 L181.4,435.3 L183.6,436.2 L185.9,437.1 L188.1,438.1 L190.4,439.0 L192.7,439.9 L195.0,440.8 L197.3,441.6 L199.6,442.5 L202.0,443.3 L204.3,444.2 L206.7,445.0 L209.1,445.8 L211.5,446.6 L213.9,447.4 L216.3,448.1 L218.8,448.9 L221.2,449.6 L223.7,450.3 L226.2,451.1 L228.6,451.7 L231.1,452.4 L233.6,453.1 L236.1,453.7 L238.7,454.4 L241.2,455.0 L243.7,455.6 L246.3,456.2 L248.8,456.7 L251.4,457.3 L253.9,457.8 L256.5,458.3 L259.1,458.9 L261.6,459.3 L264.2,459.8 L266.8,460.3 L269.4,460.7 L272.0,461.1 L274.6,461.5 L277.1,461.9 L279.7,462.3 L282.3,462.7 L284.9,463.0 L287.5,463.3 L290.1,463.6 L292.7,463.9 L295.3,464.2 L297.9,464.5 L300.5,464.7 L303.1,464.9 L305.7,465.1 L308.2,465.3 L310.8,465.5" stroke="#c06a32" stroke-width="11" fill="none"/>
<path d="M355.2,465.7 L357.6,465.5 L360.0,465.4 L362.4,465.2 L364.8,465.0 L367.2,464.7 L369.6,464.5 L371.9,464.3 L374.2,464.0 L376.5,463.7 L378.8,463.4 L381.1,463.1 L383.4,462.7 L385.6,462.4 L387.9,462.0 L390.1,461.6 L392.3,461.2 L394.5,460.8 L396.6,460.3 L398.8,459.9 L400.9,459.4 L403.0,458.9 L405.1,458.4 L407.1,457.9 L409.1,457.4 L411.2,456.8 L413.2,456.2 L415.1,455.7 L417.1,455.1 L419.0,454.4 L420.9,453.8 L422.8,453.2 L424.7,452.5 L426.5,451.8 L428.3,451.1 L430.1,450.4 L431.9,449.7 L433.6,449.0 L435.3,448.2 L437.0,447.5 L438.7,446.7 L440.3,445.9 L441.9,445.1 L443.5,444.3 L445.0,443.5" stroke="#c06a32" stroke-width="11" fill="none"/>
<path d="M100.1,376.3 L101.1,377.6 L102.0,378.9 L103.0,380.2 L104.1,381.5 L105.1,382.8 L106.2,384.2 L107.4,385.5 L108.5,386.8 L109.7,388.0 L110.9,389.3 L112.2,390.6 L113.5,391.9 L114.8,393.2 L116.1,394.5 L117.5,395.7 L118.9,397.0 L120.3,398.2 L121.7,399.5 L123.2,400.7 L124.7,402.0 L126.3,403.2 L127.8,404.4 L129.4,405.6 L131.0,406.9 L132.7,408.1 L134.3,409.3 L136.0,410.4 L137.7,411.6 L139.5,412.8 L141.3,414.0 L143.0,415.1 L144.9,416.3 L146.7,417.4 L148.6,418.5 L150.5,419.7 L152.4,420.8 L154.3,421.9 L156.3,423.0 L158.3,424.1 L160.3,425.1 L162.3,426.2 L164.3,427.2 L166.4,428.3 L168.5,429.3 L170.6,430.3 L172.7,431.3 L174.9,432.3 L177.0,433.3 L179.2,434.3 L181.4,435.3 L183.6,436.2 L185.9,437.1 L188.1,438.1 L190.4,439.0 L192.7,439.9 L195.0,440.8 L197.3,441.6 L199.6,442.5 L202.0,443.3 L204.3,444.2 L206.7,445.0 L209.1,445.8 L211.5,446.6 L213.9,447.4 L216.3,448.1 L218.8,448.9 L221.2,449.6 L223.7,450.3 L226.2,451.1 L228.6,451.7 L231.1,452.4 L233.6,453.1 L236.1,453.7 L238.7,454.4 L241.2,455.0 L243.7,455.6 L246.3,456.2 L248.8,456.7 L251.4,457.3 L253.9,457.8 L256.5,458.3 L259.1,458.9 L261.6,459.3 L264.2,459.8 L266.8,460.3 L269.4,460.7 L272.0,461.1 L274.6,461.5 L277.1,461.9 L279.7,462.3 L282.3,462.7 L284.9,463.0 L287.5,463.3 L290.1,463.6 L292.7,463.9 L295.3,464.2 L297.9,464.5 L300.5,464.7 L303.1,464.9 L305.7,465.1 L308.2,465.3 L310.8,465.5" stroke="#dca848" stroke-width="9" fill="none" stroke-dasharray="1,1.8" opacity="0.55"/>
<path d="M355.2,465.7 L357.6,465.5 L360.0,465.4 L362.4,465.2 L364.8,465.0 L367.2,464.7 L369.6,464.5 L371.9,464.3 L374.2,464.0 L376.5,463.7 L378.8,463.4 L381.1,463.1 L383.4,462.7 L385.6,462.4 L387.9,462.0 L390.1,461.6 L392.3,461.2 L394.5,460.8 L396.6,460.3 L398.8,459.9 L400.9,459.4 L403.0,458.9 L405.1,458.4 L407.1,457.9 L409.1,457.4 L411.2,456.8 L413.2,456.2 L415.1,455.7 L417.1,455.1 L419.0,454.4 L420.9,453.8 L422.8,453.2 L424.7,452.5 L426.5,451.8 L428.3,451.1 L430.1,450.4 L431.9,449.7 L433.6,449.0 L435.3,448.2 L437.0,447.5 L438.7,446.7 L440.3,445.9 L441.9,445.1 L443.5,444.3 L445.0,443.5" stroke="#dca848" stroke-width="9" fill="none" stroke-dasharray="1,1.8" opacity="0.55"/>
<path d="M101.3,413.6 L101.7,410.9 L102.2,408.3 L102.7,405.6 L103.5,403.0 L104.3,400.4 L105.3,397.8 L106.4,395.3 L107.6,392.7 L108.9,390.2 L110.4,387.7 L104.9,384.0 L103.1,386.6 L101.4,389.3 L99.8,392.0 L98.4,394.8 L97.1,397.6 L96.0,400.4 L94.9,403.4 L94.1,406.3 L93.3,409.3 L92.7,412.4 Z" fill="#1ec41e"/>
<path d="M110.6,387.6 L110.2,384.7 L109.6,381.9 L108.8,379.2 L107.9,376.7 L106.9,374.4 L105.6,372.3 L104.3,370.3 L102.7,368.5 L99.3,371.5 L100.4,373.1 L101.4,374.7 L102.3,376.6 L103.0,378.6 L103.6,380.7 L104.1,383.0 L104.4,385.5 L104.7,388.1 Z" fill="#1ec41e"/>
<path d="M110.4,388.9 L110.6,388.4 L110.9,387.8 L111.5,387.2 L112.3,386.5 L113.4,385.9 L114.8,385.3 L116.5,384.7 L118.4,384.2 L117.6,379.8 L115.4,380.1 L113.3,380.6 L111.4,381.2 L109.7,382.0 L108.2,382.9 L106.8,384.0 L105.7,385.3 L104.8,386.9 Z" fill="#1ec41e"/>
<path d="M88.2,415.5 Q93.8,410.5 94.2,400.7 L99.8,400.7 Q100.2,410.5 105.8,415.5 Z" fill="#1ec41e"/>
<path d="M124.1,429.6 L124.4,427.0 L124.9,424.4 L125.4,421.9 L126.0,419.4 L126.7,416.9 L127.6,414.4 L128.6,412.0 L129.6,409.5 L130.8,407.1 L132.1,404.8 L126.5,401.2 L124.9,403.7 L123.4,406.3 L122.0,408.9 L120.7,411.5 L119.5,414.2 L118.5,417.0 L117.5,419.8 L116.7,422.6 L116.0,425.5 L115.5,428.4 Z" fill="#1ec41e"/>
<path d="M132.3,404.7 L131.8,401.8 L131.2,399.1 L130.4,396.6 L129.4,394.2 L128.2,392.0 L126.8,389.9 L125.3,388.1 L123.6,386.4 L120.4,389.6 L121.7,391.1 L122.8,392.7 L123.7,394.4 L124.5,396.3 L125.2,398.3 L125.7,400.5 L126.1,402.8 L126.4,405.3 Z" fill="#1ec41e"/>
<path d="M132.1,406.0 L132.3,405.5 L132.6,404.9 L133.2,404.2 L134.1,403.6 L135.2,402.9 L136.7,402.3 L138.4,401.7 L140.4,401.2 L139.6,396.8 L137.3,397.1 L135.2,397.6 L133.3,398.3 L131.5,399.0 L129.9,399.9 L128.5,401.1 L127.4,402.4 L126.5,404.0 Z" fill="#1ec41e"/>
<path d="M111.0,431.5 Q116.6,426.5 117.0,416.7 L122.6,416.7 Q123.0,426.5 128.6,431.5 Z" fill="#1ec41e"/>
<path d="M148.7,445.2 L149.0,442.4 L149.4,439.6 L149.9,436.8 L150.4,434.1 L151.1,431.3 L151.9,428.7 L152.7,426.0 L153.7,423.4 L154.8,420.8 L155.9,418.2 L150.0,415.1 L148.6,417.8 L147.2,420.6 L145.9,423.4 L144.8,426.2 L143.7,429.1 L142.8,432.0 L141.9,435.0 L141.2,438.0 L140.6,441.1 L140.1,444.2 Z" fill="#1ec41e"/>
<path d="M156.0,418.5 L155.7,415.9 L155.3,413.5 L154.8,411.2 L154.2,409.0 L153.6,407.0 L152.8,405.1 L151.9,403.4 L150.9,401.8 L147.1,404.2 L147.7,405.5 L148.2,407.0 L148.7,408.6 L149.1,410.3 L149.5,412.2 L149.7,414.3 L149.9,416.5 L150.0,418.9 Z" fill="#1ec41e"/>
<path d="M155.9,419.2 L156.1,418.1 L156.4,417.0 L156.8,416.1 L157.3,415.2 L158.0,414.3 L158.8,413.5 L159.8,412.8 L160.9,412.1 L159.1,407.9 L157.4,408.7 L155.9,409.6 L154.5,410.6 L153.2,411.9 L152.1,413.2 L151.3,414.8 L150.6,416.4 L150.1,418.2 Z" fill="#1ec41e"/>
<path d="M135.7,447.2 Q141.2,442.2 141.6,432.4 L147.2,432.4 Q147.6,442.2 153.2,447.2 Z" fill="#1ec41e"/>
<path d="M173.3,456.5 L173.6,453.6 L174.0,450.8 L174.4,448.0 L175.0,445.2 L175.7,442.5 L176.4,439.8 L177.3,437.1 L178.2,434.5 L179.3,431.9 L180.5,429.3 L174.5,426.2 L173.1,429.0 L171.7,431.7 L170.5,434.5 L169.3,437.4 L168.3,440.3 L167.3,443.2 L166.5,446.2 L165.8,449.3 L165.2,452.4 L164.7,455.5 Z" fill="#1ec41e"/>
<path d="M180.5,429.4 L179.9,426.5 L179.2,423.6 L178.3,421.0 L177.1,418.5 L175.8,416.1 L174.2,414.0 L172.4,412.0 L170.5,410.3 L167.5,413.7 L169.0,415.3 L170.3,417.0 L171.4,418.8 L172.4,420.7 L173.2,422.8 L173.8,425.1 L174.2,427.5 L174.5,430.1 Z" fill="#1ec41e"/>
<path d="M180.3,430.8 L180.5,430.1 L180.9,429.4 L181.6,428.7 L182.6,427.9 L183.8,427.2 L185.4,426.5 L187.3,425.8 L189.4,425.2 L188.6,420.8 L186.1,421.2 L183.8,421.8 L181.8,422.5 L179.9,423.4 L178.2,424.4 L176.8,425.6 L175.6,427.1 L174.7,428.8 Z" fill="#1ec41e"/>
<path d="M160.2,458.5 Q165.8,453.5 166.2,443.7 L171.8,443.7 Q172.2,453.5 177.8,458.5 Z" fill="#1ec41e"/>
<path d="M221.2,477.2 L221.3,473.8 L221.5,470.4 L221.7,467.1 L222.0,463.8 L222.4,460.6 L222.8,457.4 L223.2,454.2 L223.8,451.1 L224.4,448.1 L225.0,445.1 L218.6,443.4 L217.7,446.5 L216.9,449.6 L216.1,452.9 L215.4,456.1 L214.7,459.4 L214.2,462.8 L213.6,466.2 L213.2,469.7 L212.8,473.2 L212.4,476.8 Z" fill="#1ec41e"/>
<path d="M224.7,445.8 L224.0,442.6 L223.0,439.7 L221.7,436.9 L220.2,434.4 L218.3,432.0 L216.2,429.8 L213.8,427.9 L211.2,426.1 L208.8,429.9 L210.9,431.6 L212.8,433.3 L214.4,435.2 L215.8,437.2 L216.9,439.4 L217.8,441.6 L218.4,444.1 L218.8,446.7 Z" fill="#1ec41e"/>
<path d="M224.8,446.2 L224.7,444.0 L224.6,441.8 L224.5,439.9 L224.5,438.0 L224.4,436.3 L224.4,434.8 L224.3,433.4 L224.3,432.1 L219.7,431.9 L219.6,433.2 L219.5,434.7 L219.3,436.2 L219.2,438.0 L219.1,439.8 L219.0,441.8 L218.9,443.9 L218.8,446.2 Z" fill="#1ec41e"/>
<path d="M224.6,447.2 L225.0,446.1 L225.6,445.1 L226.6,444.0 L227.8,442.9 L229.5,441.9 L231.5,440.9 L233.8,440.0 L236.5,439.2 L235.5,434.8 L232.4,435.5 L229.7,436.4 L227.2,437.4 L225.0,438.5 L223.0,439.9 L221.3,441.5 L220.0,443.2 L219.0,445.3 Z" fill="#1ec41e"/>
<path d="M208.1,479.5 Q213.7,474.5 214.0,464.7 L219.6,464.7 Q220.0,474.5 225.6,479.5 Z" fill="#1ec41e"/>
<path d="M264.0,487.4 L264.2,484.0 L264.6,480.7 L265.1,477.4 L265.6,474.1 L266.3,470.9 L267.0,467.7 L267.9,464.6 L268.8,461.5 L269.9,458.4 L271.1,455.4 L265.0,452.7 L263.5,455.9 L262.2,459.1 L261.0,462.3 L259.8,465.6 L258.8,469.0 L257.9,472.4 L257.1,475.9 L256.4,479.4 L255.8,483.0 L255.2,486.6 Z" fill="#1ec41e"/>
<path d="M271.0,455.8 L270.5,453.2 L269.9,450.7 L269.1,448.4 L268.1,446.3 L267.0,444.3 L265.6,442.4 L264.2,440.8 L262.5,439.3 L259.5,442.7 L260.7,444.0 L261.7,445.4 L262.6,446.9 L263.4,448.5 L264.0,450.2 L264.5,452.1 L264.8,454.2 L265.1,456.4 Z" fill="#1ec41e"/>
<path d="M270.9,456.6 L271.3,454.8 L271.8,453.2 L272.5,451.7 L273.3,450.3 L274.4,448.9 L275.7,447.6 L277.3,446.4 L279.0,445.3 L277.0,441.3 L274.7,442.4 L272.7,443.8 L270.8,445.3 L269.2,447.0 L267.8,448.9 L266.6,451.0 L265.7,453.2 L265.1,455.6 Z" fill="#1ec41e"/>
<path d="M250.9,489.5 Q256.5,484.5 256.8,474.7 L262.4,474.7 Q262.8,484.5 268.4,489.5 Z" fill="#1ec41e"/>
<path d="M291.3,488.6 L291.7,485.4 L292.2,482.3 L292.8,479.3 L293.5,476.2 L294.3,473.2 L295.3,470.3 L296.4,467.4 L297.6,464.5 L298.9,461.6 L300.4,458.8 L294.7,455.4 L292.9,458.4 L291.2,461.4 L289.7,464.5 L288.3,467.6 L287.0,470.8 L285.9,474.0 L284.9,477.3 L284.0,480.6 L283.3,484.0 L282.7,487.4 Z" fill="#1ec41e"/>
<path d="M300.5,458.7 L299.9,456.1 L299.1,453.7 L298.0,451.4 L296.8,449.3 L295.3,447.4 L293.5,445.6 L291.6,444.1 L289.5,442.7 L287.1,446.5 L288.7,447.8 L290.1,449.1 L291.3,450.6 L292.3,452.1 L293.2,453.8 L293.8,455.6 L294.3,457.5 L294.6,459.5 Z" fill="#1ec41e"/>
<path d="M300.4,459.8 L300.8,458.3 L301.5,456.8 L302.4,455.4 L303.5,454.1 L305.0,452.8 L306.8,451.6 L308.9,450.4 L311.3,449.3 L309.7,445.1 L306.9,446.1 L304.4,447.3 L302.0,448.7 L300.0,450.2 L298.2,452.0 L296.7,453.9 L295.5,456.1 L294.7,458.4 Z" fill="#1ec41e"/>
<path d="M278.2,490.5 Q283.9,485.5 284.2,475.7 L289.8,475.7 Q290.1,485.5 295.8,490.5 Z" fill="#1ec41e"/>
<path d="M369.2,487.1 L369.1,483.9 L369.1,480.7 L369.1,477.6 L369.1,474.5 L369.2,471.5 L369.2,468.5 L369.3,465.5 L369.4,462.6 L369.5,459.8 L369.6,456.9 L363.0,456.4 L362.7,459.2 L362.4,462.1 L362.0,465.1 L361.8,468.1 L361.5,471.1 L361.2,474.2 L361.0,477.3 L360.8,480.5 L360.6,483.7 L360.4,486.9 Z" fill="#1ec41e"/>
<path d="M369.3,458.3 L368.8,456.1 L368.2,454.1 L367.4,452.3 L366.4,450.5 L365.2,448.9 L363.9,447.5 L362.4,446.2 L360.8,445.1 L358.2,448.9 L359.4,449.8 L360.3,450.9 L361.2,452.0 L361.8,453.2 L362.4,454.5 L362.9,455.9 L363.2,457.4 L363.4,459.0 Z" fill="#1ec41e"/>
<path d="M369.3,459.0 L369.5,456.9 L369.9,455.0 L370.4,453.2 L371.1,451.6 L371.9,450.0 L372.8,448.6 L373.9,447.3 L375.1,446.1 L372.3,442.5 L370.6,443.9 L369.0,445.5 L367.6,447.2 L366.4,449.2 L365.4,451.2 L364.5,453.5 L363.9,455.8 L363.4,458.3 Z" fill="#1ec41e"/>
<path d="M356.1,489.5 Q361.7,484.5 362.0,474.7 L367.6,474.7 Q367.9,484.5 373.6,489.5 Z" fill="#1ec41e"/>
<path d="M394.0,485.8 L394.1,482.5 L394.3,479.3 L394.5,476.1 L394.8,472.9 L395.2,469.8 L395.6,466.7 L396.1,463.7 L396.7,460.7 L397.3,457.8 L398.0,454.9 L391.6,453.1 L390.7,456.1 L389.8,459.1 L389.0,462.2 L388.3,465.4 L387.6,468.6 L387.0,471.8 L386.5,475.1 L386.0,478.4 L385.6,481.8 L385.2,485.2 Z" fill="#1ec41e"/>
<path d="M397.7,455.4 L397.0,453.1 L396.0,451.0 L394.7,449.1 L393.2,447.4 L391.5,445.8 L389.5,444.4 L387.3,443.2 L384.9,442.2 L383.1,446.4 L385.1,447.4 L386.8,448.5 L388.2,449.7 L389.4,450.9 L390.3,452.2 L391.0,453.6 L391.5,455.0 L391.9,456.6 Z" fill="#1ec41e"/>
<path d="M397.7,456.5 L398.1,454.5 L398.8,452.5 L399.7,450.7 L400.9,448.9 L402.3,447.2 L404.1,445.7 L406.1,444.2 L408.4,442.8 L406.4,438.8 L403.6,440.2 L401.1,441.8 L398.9,443.6 L396.9,445.6 L395.2,447.7 L393.7,450.1 L392.6,452.7 L391.9,455.4 Z" fill="#1ec41e"/>
<path d="M380.9,488.0 Q386.5,483.0 386.8,473.2 L392.4,473.2 Q392.8,483.0 398.4,488.0 Z" fill="#1ec41e"/>
<path d="M431.4,475.4 L431.2,472.3 L431.0,469.2 L430.8,466.2 L430.5,463.2 L430.2,460.3 L430.0,457.4 L429.7,454.5 L429.3,451.7 L429.0,448.9 L428.6,446.2 L422.0,446.9 L422.1,449.6 L422.3,452.3 L422.4,455.1 L422.5,457.9 L422.6,460.7 L422.6,463.6 L422.6,466.6 L422.7,469.5 L422.7,472.5 L422.6,475.6 Z" fill="#1ec41e"/>
<path d="M428.2,448.0 L427.7,446.2 L427.0,444.4 L426.1,442.8 L425.0,441.3 L423.7,440.0 L422.3,438.8 L420.7,437.8 L419.0,437.0 L417.0,441.0 L418.2,441.8 L419.3,442.6 L420.1,443.5 L420.8,444.5 L421.4,445.5 L421.9,446.6 L422.2,447.7 L422.4,449.0 Z" fill="#1ec41e"/>
<path d="M428.3,448.8 L428.5,446.5 L428.8,444.4 L429.3,442.5 L429.9,440.6 L430.6,438.9 L431.5,437.4 L432.4,436.0 L433.6,434.6 L430.4,431.4 L428.9,432.9 L427.4,434.6 L426.2,436.5 L425.1,438.5 L424.1,440.8 L423.4,443.1 L422.8,445.6 L422.3,448.2 Z" fill="#1ec41e"/>
<path d="M418.2,478.0 Q423.9,473.0 424.2,463.2 L429.8,463.2 Q430.1,473.0 435.8,478.0 Z" fill="#1ec41e"/>
<path d="M448.4,463.1 L448.3,460.4 L448.3,457.8 L448.2,455.2 L448.2,452.6 L448.1,450.1 L448.1,447.6 L448.1,445.1 L448.1,442.7 L448.1,440.3 L448.2,437.9 L441.5,437.5 L441.3,439.9 L441.1,442.4 L440.9,444.8 L440.6,447.3 L440.4,449.8 L440.3,452.4 L440.1,455.0 L439.9,457.6 L439.8,460.3 L439.6,462.9 Z" fill="#1ec41e"/>
<path d="M447.8,439.3 L447.4,437.6 L446.8,436.0 L446.0,434.5 L445.1,433.1 L444.1,431.8 L442.9,430.7 L441.5,429.8 L440.1,429.0 L437.9,433.0 L438.8,433.7 L439.6,434.4 L440.2,435.2 L440.8,436.0 L441.2,436.9 L441.5,437.9 L441.8,439.0 L441.9,440.2 Z" fill="#1ec41e"/>
<path d="M447.8,440.0 L448.0,438.0 L448.3,436.2 L448.7,434.4 L449.2,432.9 L449.9,431.4 L450.6,430.0 L451.5,428.8 L452.5,427.7 L449.5,424.3 L448.0,425.7 L446.7,427.2 L445.5,428.9 L444.5,430.7 L443.6,432.7 L442.9,434.8 L442.3,437.0 L441.9,439.4 Z" fill="#1ec41e"/>
<path d="M435.2,465.5 Q440.9,460.5 441.2,450.7 L446.8,450.7 Q447.1,460.5 452.8,465.5 Z" fill="#1ec41e"/>
<path d="M460.4,456.1 L460.4,453.2 L460.4,450.3 L460.4,447.5 L460.5,444.7 L460.6,441.9 L460.7,439.2 L460.8,436.5 L461.0,433.8 L461.2,431.2 L461.4,428.6 L454.8,427.7 L454.4,430.3 L454.0,433.0 L453.6,435.7 L453.2,438.5 L452.9,441.3 L452.6,444.1 L452.3,447.0 L452.1,449.9 L451.8,452.9 L451.6,455.9 Z" fill="#1ec41e"/>
<path d="M461.1,429.8 L460.7,428.0 L460.2,426.4 L459.5,424.9 L458.7,423.4 L457.8,422.1 L456.7,421.0 L455.6,420.0 L454.2,419.1 L451.8,422.9 L452.5,423.6 L453.2,424.3 L453.7,425.1 L454.2,426.0 L454.5,427.0 L454.8,428.0 L455.0,429.2 L455.2,430.5 Z" fill="#1ec41e"/>
<path d="M461.1,430.4 L461.3,428.2 L461.6,426.1 L462.0,424.2 L462.5,422.4 L463.1,420.7 L463.8,419.2 L464.7,417.8 L465.6,416.6 L462.4,413.4 L460.9,414.9 L459.7,416.6 L458.6,418.5 L457.6,420.5 L456.8,422.6 L456.1,424.9 L455.6,427.3 L455.2,429.9 Z" fill="#1ec41e"/>
<path d="M447.2,458.5 Q452.9,453.5 453.2,443.7 L458.8,443.7 Q459.1,453.5 464.8,458.5 Z" fill="#1ec41e"/>
<path d="M472.9,446.1 L472.9,443.2 L472.9,440.4 L473.0,437.5 L473.1,434.7 L473.2,431.9 L473.4,429.2 L473.6,426.5 L473.8,423.9 L474.1,421.2 L474.3,418.7 L467.8,417.6 L467.3,420.3 L466.8,423.0 L466.3,425.7 L465.9,428.4 L465.6,431.2 L465.2,434.1 L464.9,437.0 L464.6,439.9 L464.4,442.9 L464.1,445.9 Z" fill="#1ec41e"/>
<path d="M474.0,419.9 L473.7,418.2 L473.3,416.6 L472.8,415.0 L472.1,413.6 L471.4,412.4 L470.5,411.2 L469.5,410.1 L468.5,409.2 L465.5,412.8 L466.1,413.4 L466.6,414.1 L467.0,414.9 L467.3,415.8 L467.6,416.8 L467.8,417.9 L468.0,419.1 L468.1,420.4 Z" fill="#1ec41e"/>
<path d="M474.0,420.4 L474.2,418.1 L474.4,416.0 L474.7,414.0 L475.2,412.2 L475.7,410.6 L476.3,409.0 L477.0,407.7 L477.8,406.4 L474.2,403.6 L473.0,405.1 L471.9,406.8 L471.0,408.6 L470.2,410.6 L469.5,412.7 L468.9,415.0 L468.4,417.4 L468.1,419.9 Z" fill="#1ec41e"/>
<path d="M459.8,448.5 Q465.4,443.5 465.7,433.7 L471.3,433.7 Q471.6,443.5 477.2,448.5 Z" fill="#1ec41e"/>
<path d="M483.4,424.2 L483.4,422.2 L483.4,420.2 L483.4,418.2 L483.5,416.2 L483.6,414.3 L483.7,412.4 L483.8,410.5 L484.0,408.6 L484.2,406.7 L484.4,404.9 L477.9,403.7 L477.4,405.6 L477.0,407.5 L476.6,409.5 L476.3,411.5 L475.9,413.5 L475.6,415.5 L475.3,417.5 L475.1,419.6 L474.8,421.7 L474.6,423.8 Z" fill="#1ec41e"/>
<path d="M484.1,405.9 L483.8,404.8 L483.4,403.6 L483.0,402.6 L482.4,401.6 L481.7,400.8 L480.9,400.0 L480.0,399.4 L479.0,399.0 L477.0,403.0 L477.3,403.3 L477.5,403.6 L477.7,403.9 L477.9,404.3 L478.0,404.8 L478.1,405.3 L478.1,405.9 L478.2,406.6 Z" fill="#1ec41e"/>
<path d="M484.1,406.5 L484.2,404.5 L484.3,402.6 L484.6,400.9 L484.9,399.3 L485.3,397.9 L485.7,396.6 L486.3,395.4 L486.8,394.3 L483.2,391.7 L482.2,393.0 L481.3,394.5 L480.5,396.1 L479.9,397.8 L479.3,399.7 L478.8,401.7 L478.4,403.8 L478.2,406.1 Z" fill="#1ec41e"/>
<path d="M470.2,426.5 Q475.9,421.5 476.2,411.7 L481.8,411.7 Q482.1,421.5 487.8,426.5 Z" fill="#1ec41e"/>
<rect x="0" y="0" width="1000" height="30" fill="#3c4649"/>
<rect x="0" y="0" width="1000" height="1" fill="#050607"/>
<rect x="0" y="1" width="1000" height="1" fill="#4a5357"/>
<rect x="0" y="28.8" width="1000" height="1.4" fill="#2c3336"/>
<rect x="0" y="30.2" width="1000" height="1.4" fill="#f0f3f6"/>
<rect x="811.5" y="5.8" width="111" height="20" rx="10" fill="#6c6c6c"/>
<path d="M821.5 5.8 H832 V25.8 H821.5 A10 10 0 0 1 821.5 5.8 Z" fill="#12b347"/>
<path d="M820 14.6 L823.2 17.6 L826.4 14.6" fill="none" stroke="#e0f5e0" stroke-width="1.4"/>
<text x="845" y="20" class="r" font-size="13.5" style="fill:#b4b4b4" textLength="58.6" lengthAdjust="spacingAndGlyphs">Slice plate</text>
<path d="M945.6 5.8 H1000 V25.8 H945.6 A10 10 0 0 1 945.6 5.8 Z" fill="#12b347"/>
<rect x="955" y="5.8" width="1.2" height="20" fill="#0e7a35"/>
<path d="M943.5 14.6 L946.7 17.6 L949.9 14.6" fill="none" stroke="#e0f5e0" stroke-width="1.4"/>
<text x="969.6" y="20.5" class="r" font-size="14" style="fill:#e8f5e8" textLength="26" lengthAdjust="spacingAndGlyphs">Print</text>
<rect x="619.8" y="30.3" width="358.4" height="464.4" fill="#f0f0f0"/>
<rect x="621" y="30.3" width="356" height="463.2" fill="#3e3e3e"/>
<rect x="621" y="30.3" width="356" height="25.7" fill="#2c2c2c"/>
<rect x="621" y="56" width="356" height="17" fill="#3a3a3a"/>
<rect x="621" y="73" width="355" height="1.6" fill="#8c8c8c"/>
<path d="M632 44 L637 40.4 L642 44 M632 47.2 L637 43.6 L642 47.2" fill="none" stroke="#dcdcdc" stroke-width="1.1"/>
<text x="653" y="47.3" class="b" font-size="10.5" textLength="68" lengthAdjust="spacingAndGlyphs">Color Scheme</text>
<rect x="729.5" y="38.5" width="161" height="15" rx="3" fill="#1f1f1f" stroke="#404040" stroke-width="1"/>
<path d="M734 44.5 L738 48 L742 44.5" fill="none" stroke="#e0e0e0" stroke-width="1.2"/>
<text x="749" y="49.8" class="r" font-size="11" style="fill:#e6e6e6" textLength="47" lengthAdjust="spacingAndGlyphs">Line Type</text>
<text x="631" y="67.8" class="b" font-size="10.5" textLength="48" lengthAdjust="spacingAndGlyphs">Line Type</text>
<text x="734.8" y="67.8" class="b" font-size="10.5" textLength="23.2" lengthAdjust="spacingAndGlyphs">Time</text>
<text x="785.2" y="67.8" class="b" font-size="10.5" textLength="38.8" lengthAdjust="spacingAndGlyphs">Percent</text>
<text x="836" y="67.8" class="b" font-size="10.5" textLength="68.8" lengthAdjust="spacingAndGlyphs">Used filament</text>
<text x="930.4" y="67.8" class="b" font-size="10.5" textLength="36.4" lengthAdjust="spacingAndGlyphs">Display</text>
<rect x="631" y="79.0" width="7.6" height="7.6" fill="#f2dc3c"/>
<text x="645.3" y="86.6" class="r" font-size="11">Inner wall</text>
<text x="734.6" y="86.6" class="n">14m33s</text>
<text x="785.4" y="86.6" class="n">5.3%</text>
<text x="835.4" y="86.6" class="n">6.34 m</text>
<text x="881" y="86.6" class="n">19.22 g</text>
<rect x="933.7" y="77.0" width="12" height="12" fill="#4e4e4e"/>
<path d="M936.4 81.6 L938.8 85.2 L943.6 80.4" fill="none" stroke="#22b455" stroke-width="2.5" stroke-linecap="round" stroke-linejoin="round"/>
<rect x="631" y="96.2" width="7.6" height="7.6" fill="#f07c3c"/>
<text x="645.3" y="103.8" class="r" font-size="11">Outer wall</text>
<text x="734.6" y="103.8" class="n">31m28s</text>
<text x="785.4" y="103.8" class="n">11.5%</text>
<text x="835.4" y="103.8" class="n">8.50 m</text>
<text x="881" y="103.8" class="n">25.75 g</text>
<rect x="933.7" y="94.2" width="12" height="12" fill="#4e4e4e"/>
<path d="M936.4 98.8 L938.8 102.4 L943.6 97.6" fill="none" stroke="#22b455" stroke-width="2.5" stroke-linecap="round" stroke-linejoin="round"/>
<rect x="631" y="113.5" width="7.6" height="7.6" fill="#1f1fe6"/>
<text x="645.3" y="121.1" class="r" font-size="11">Overhang wall</text>
<text x="734.6" y="121.1" class="n">51s</text>
<text x="785.4" y="121.1" class="n">0.3%</text>
<text x="835.4" y="121.1" class="n">0.09 m</text>
<text x="881" y="121.1" class="n">0.26 g</text>
<rect x="933.7" y="111.5" width="12" height="12" fill="#4e4e4e"/>
<path d="M936.4 116.1 L938.8 119.7 L943.6 114.9" fill="none" stroke="#22b455" stroke-width="2.5" stroke-linecap="round" stroke-linejoin="round"/>
<rect x="631" y="130.7" width="7.6" height="7.6" fill="#b02828"/>
<text x="645.3" y="138.3" class="r" font-size="11">Sparse infill</text>
<text x="734.6" y="138.3" class="n">30m13s</text>
<text x="785.4" y="138.3" class="n">11.0%</text>
<text x="835.4" y="138.3" class="n">10.09 m</text>
<text x="881" y="138.3" class="n">30.58 g</text>
<rect x="933.7" y="128.7" width="12" height="12" fill="#4e4e4e"/>
<path d="M936.4 133.3 L938.8 136.9 L943.6 132.1" fill="none" stroke="#22b455" stroke-width="2.5" stroke-linecap="round" stroke-linejoin="round"/>
<rect x="631" y="148.0" width="7.6" height="7.6" fill="#9a4fd0"/>
<text x="645.3" y="155.6" class="r" font-size="11">Internal solid infill</text>
<text x="734.6" y="155.6" class="n">45m26s</text>
<text x="785.4" y="155.6" class="n">16.5%</text>
<text x="835.4" y="155.6" class="n">19.71 m</text>
<text x="881" y="155.6" class="n">59.73 g</text>
<rect x="933.7" y="146.0" width="12" height="12" fill="#4e4e4e"/>
<path d="M936.4 150.6 L938.8 154.2 L943.6 149.4" fill="none" stroke="#22b455" stroke-width="2.5" stroke-linecap="round" stroke-linejoin="round"/>
<rect x="631" y="165.2" width="7.6" height="7.6" fill="#f04040"/>
<text x="645.3" y="172.8" class="r" font-size="11">Top surface</text>
<text x="734.6" y="172.8" class="n">11m46s</text>
<text x="785.4" y="172.8" class="n">4.3%</text>
<text x="835.4" y="172.8" class="n">3.32 m</text>
<text x="881" y="172.8" class="n">10.07 g</text>
<rect x="933.7" y="163.2" width="12" height="12" fill="#4e4e4e"/>
<path d="M936.4 167.8 L938.8 171.4 L943.6 166.6" fill="none" stroke="#22b455" stroke-width="2.5" stroke-linecap="round" stroke-linejoin="round"/>
<rect x="631" y="182.4" width="7.6" height="7.6" fill="#6e6ed0"/>
<text x="645.3" y="190.0" class="r" font-size="11">Bottom surface</text>
<text x="734.6" y="190.0" class="n">17m20s</text>
<text x="785.4" y="190.0" class="n">6.3%</text>
<text x="835.4" y="190.0" class="n">3.58 m</text>
<text x="881" y="190.0" class="n">10.86 g</text>
<rect x="933.7" y="180.4" width="12" height="12" fill="#4e4e4e"/>
<path d="M936.4 185.0 L938.8 188.6 L943.6 183.8" fill="none" stroke="#22b455" stroke-width="2.5" stroke-linecap="round" stroke-linejoin="round"/>
<rect x="631" y="199.7" width="7.6" height="7.6" fill="#4f7fc0"/>
<text x="645.3" y="207.3" class="r" font-size="11">Bridge</text>
<text x="734.6" y="207.3" class="n">33m2s</text>
<text x="785.4" y="207.3" class="n">12.0%</text>
<text x="835.4" y="207.3" class="n">4.93 m</text>
<text x="881" y="207.3" class="n">14.93 g</text>
<rect x="933.7" y="197.7" width="12" height="12" fill="#4e4e4e"/>
<path d="M936.4 202.3 L938.8 205.9 L943.6 201.1" fill="none" stroke="#22b455" stroke-width="2.5" stroke-linecap="round" stroke-linejoin="round"/>
<rect x="631" y="216.9" width="7.6" height="7.6" fill="#ffffff"/>
<text x="645.3" y="224.5" class="r" font-size="11">Gap infill</text>
<text x="734.6" y="224.5" class="n">6m58s</text>
<text x="785.4" y="224.5" class="n">2.5%</text>
<text x="835.4" y="224.5" class="n">0.62 m</text>
<text x="881" y="224.5" class="n">1.89 g</text>
<rect x="933.7" y="214.9" width="12" height="12" fill="#4e4e4e"/>
<path d="M936.4 219.5 L938.8 223.1 L943.6 218.3" fill="none" stroke="#22b455" stroke-width="2.5" stroke-linecap="round" stroke-linejoin="round"/>
<rect x="631" y="234.2" width="7.6" height="7.6" fill="#10e010"/>
<text x="645.3" y="241.8" class="r" font-size="11">Support</text>
<text x="734.6" y="241.8" class="n">37m52s</text>
<text x="785.4" y="241.8" class="n">13.8%</text>
<text x="835.4" y="241.8" class="n">4.15 m</text>
<text x="881" y="241.8" class="n">12.59 g</text>
<rect x="933.7" y="232.2" width="12" height="12" fill="#4e4e4e"/>
<path d="M936.4 236.8 L938.8 240.4 L943.6 235.6" fill="none" stroke="#22b455" stroke-width="2.5" stroke-linecap="round" stroke-linejoin="round"/>
<rect x="631" y="251.4" width="7.6" height="7.6" fill="#107010"/>
<text x="645.3" y="259.0" class="r" font-size="11">Support interface</text>
<text x="734.6" y="259.0" class="n">1m51s</text>
<text x="785.4" y="259.0" class="n">0.7%</text>
<text x="835.4" y="259.0" class="n">0.14 m</text>
<text x="881" y="259.0" class="n">0.42 g</text>
<rect x="933.7" y="249.4" width="12" height="12" fill="#4e4e4e"/>
<path d="M936.4 254.0 L938.8 257.6 L943.6 252.8" fill="none" stroke="#22b455" stroke-width="2.5" stroke-linecap="round" stroke-linejoin="round"/>
<rect x="631" y="268.6" width="7.6" height="7.6" fill="#5ec88f"/>
<text x="645.3" y="276.2" class="r" font-size="11">Custom</text>
<text x="734.6" y="276.2" class="n">6m1s</text>
<text x="785.4" y="276.2" class="n">2.2%</text>
<text x="835.4" y="276.2" class="n">0.03 m</text>
<text x="881" y="276.2" class="n">0.10 g</text>
<rect x="933.7" y="266.6" width="12" height="12" fill="#4e4e4e"/>
<path d="M936.4 271.2 L938.8 274.8 L943.6 270.0" fill="none" stroke="#22b455" stroke-width="2.5" stroke-linecap="round" stroke-linejoin="round"/>
<rect x="631" y="285.9" width="7.6" height="7.6" fill="#2c3c9c"/>
<text x="645.3" y="293.5" class="r" font-size="11">Travel</text>
<text x="734.6" y="293.5" class="n">37m29s</text>
<text x="785.4" y="293.5" class="n">13.6%</text>
<rect x="933.7" y="283.9" width="12" height="12" fill="#4e4e4e"/>
<rect x="631" y="303.1" width="7.6" height="7.6" fill="#d020d0"/>
<text x="645.3" y="310.7" class="r" font-size="11">Retract</text>
<rect x="933.7" y="301.1" width="12" height="12" fill="#4e4e4e"/>
<rect x="631" y="320.4" width="7.6" height="7.6" fill="#40b0d8"/>
<text x="645.3" y="328.0" class="r" font-size="11">Unretract</text>
<rect x="933.7" y="318.4" width="12" height="12" fill="#4e4e4e"/>
<rect x="631" y="337.6" width="7.6" height="7.6" fill="#f0f000"/>
<text x="645.3" y="345.2" class="r" font-size="11">Wipe</text>
<rect x="933.7" y="335.6" width="12" height="12" fill="#4e4e4e"/>
<rect x="631" y="354.8" width="7.6" height="7.6" fill="#e8e8e8"/>
<text x="645.3" y="362.4" class="r" font-size="11">Seams</text>
<rect x="933.7" y="352.8" width="12" height="12" fill="#4e4e4e"/>
<path d="M936.4 357.4 L938.8 361.0 L943.6 356.2" fill="none" stroke="#22b455" stroke-width="2.5" stroke-linecap="round" stroke-linejoin="round"/>
<text x="630.8" y="387.5" class="b" font-size="10.5" textLength="82" lengthAdjust="spacingAndGlyphs">Total Estimation</text>
<rect x="621" y="393" width="355" height="1.6" fill="#8c8c8c"/>
<text x="630.8" y="406.6" class="r" font-size="11">Total Filament:</text>
<text x="732.6" y="406.6" class="n">61.50 m</text>
<text x="784" y="406.6" class="n">186.39 g</text>
<text x="630.8" y="422.2" class="r" font-size="11">Model Filament:</text>
<text x="732.6" y="422.2" class="n">57.21 m</text>
<text x="784" y="422.2" class="n">173.38 g</text>
<text x="630.8" y="437.8" class="r" font-size="11">Cost:</text>
<text x="732.6" y="437.8" class="n">4.66</text>
<text x="630.8" y="453.5" class="r" font-size="11">Prepare time:</text>
<text x="732.6" y="453.5" class="n">5m46s</text>
<text x="630.8" y="469.1" class="r" font-size="11">Model printing time:</text>
<text x="732.6" y="469.1" class="n">4h29m</text>
<text x="630.8" y="484.7" class="r" font-size="11">Total time:</text>
<text x="732.6" y="484.7" class="n">4h35m</text>
<rect x="998" y="140" width="2" height="32" fill="#f4f4f4"/>
</svg>
</body></html>
